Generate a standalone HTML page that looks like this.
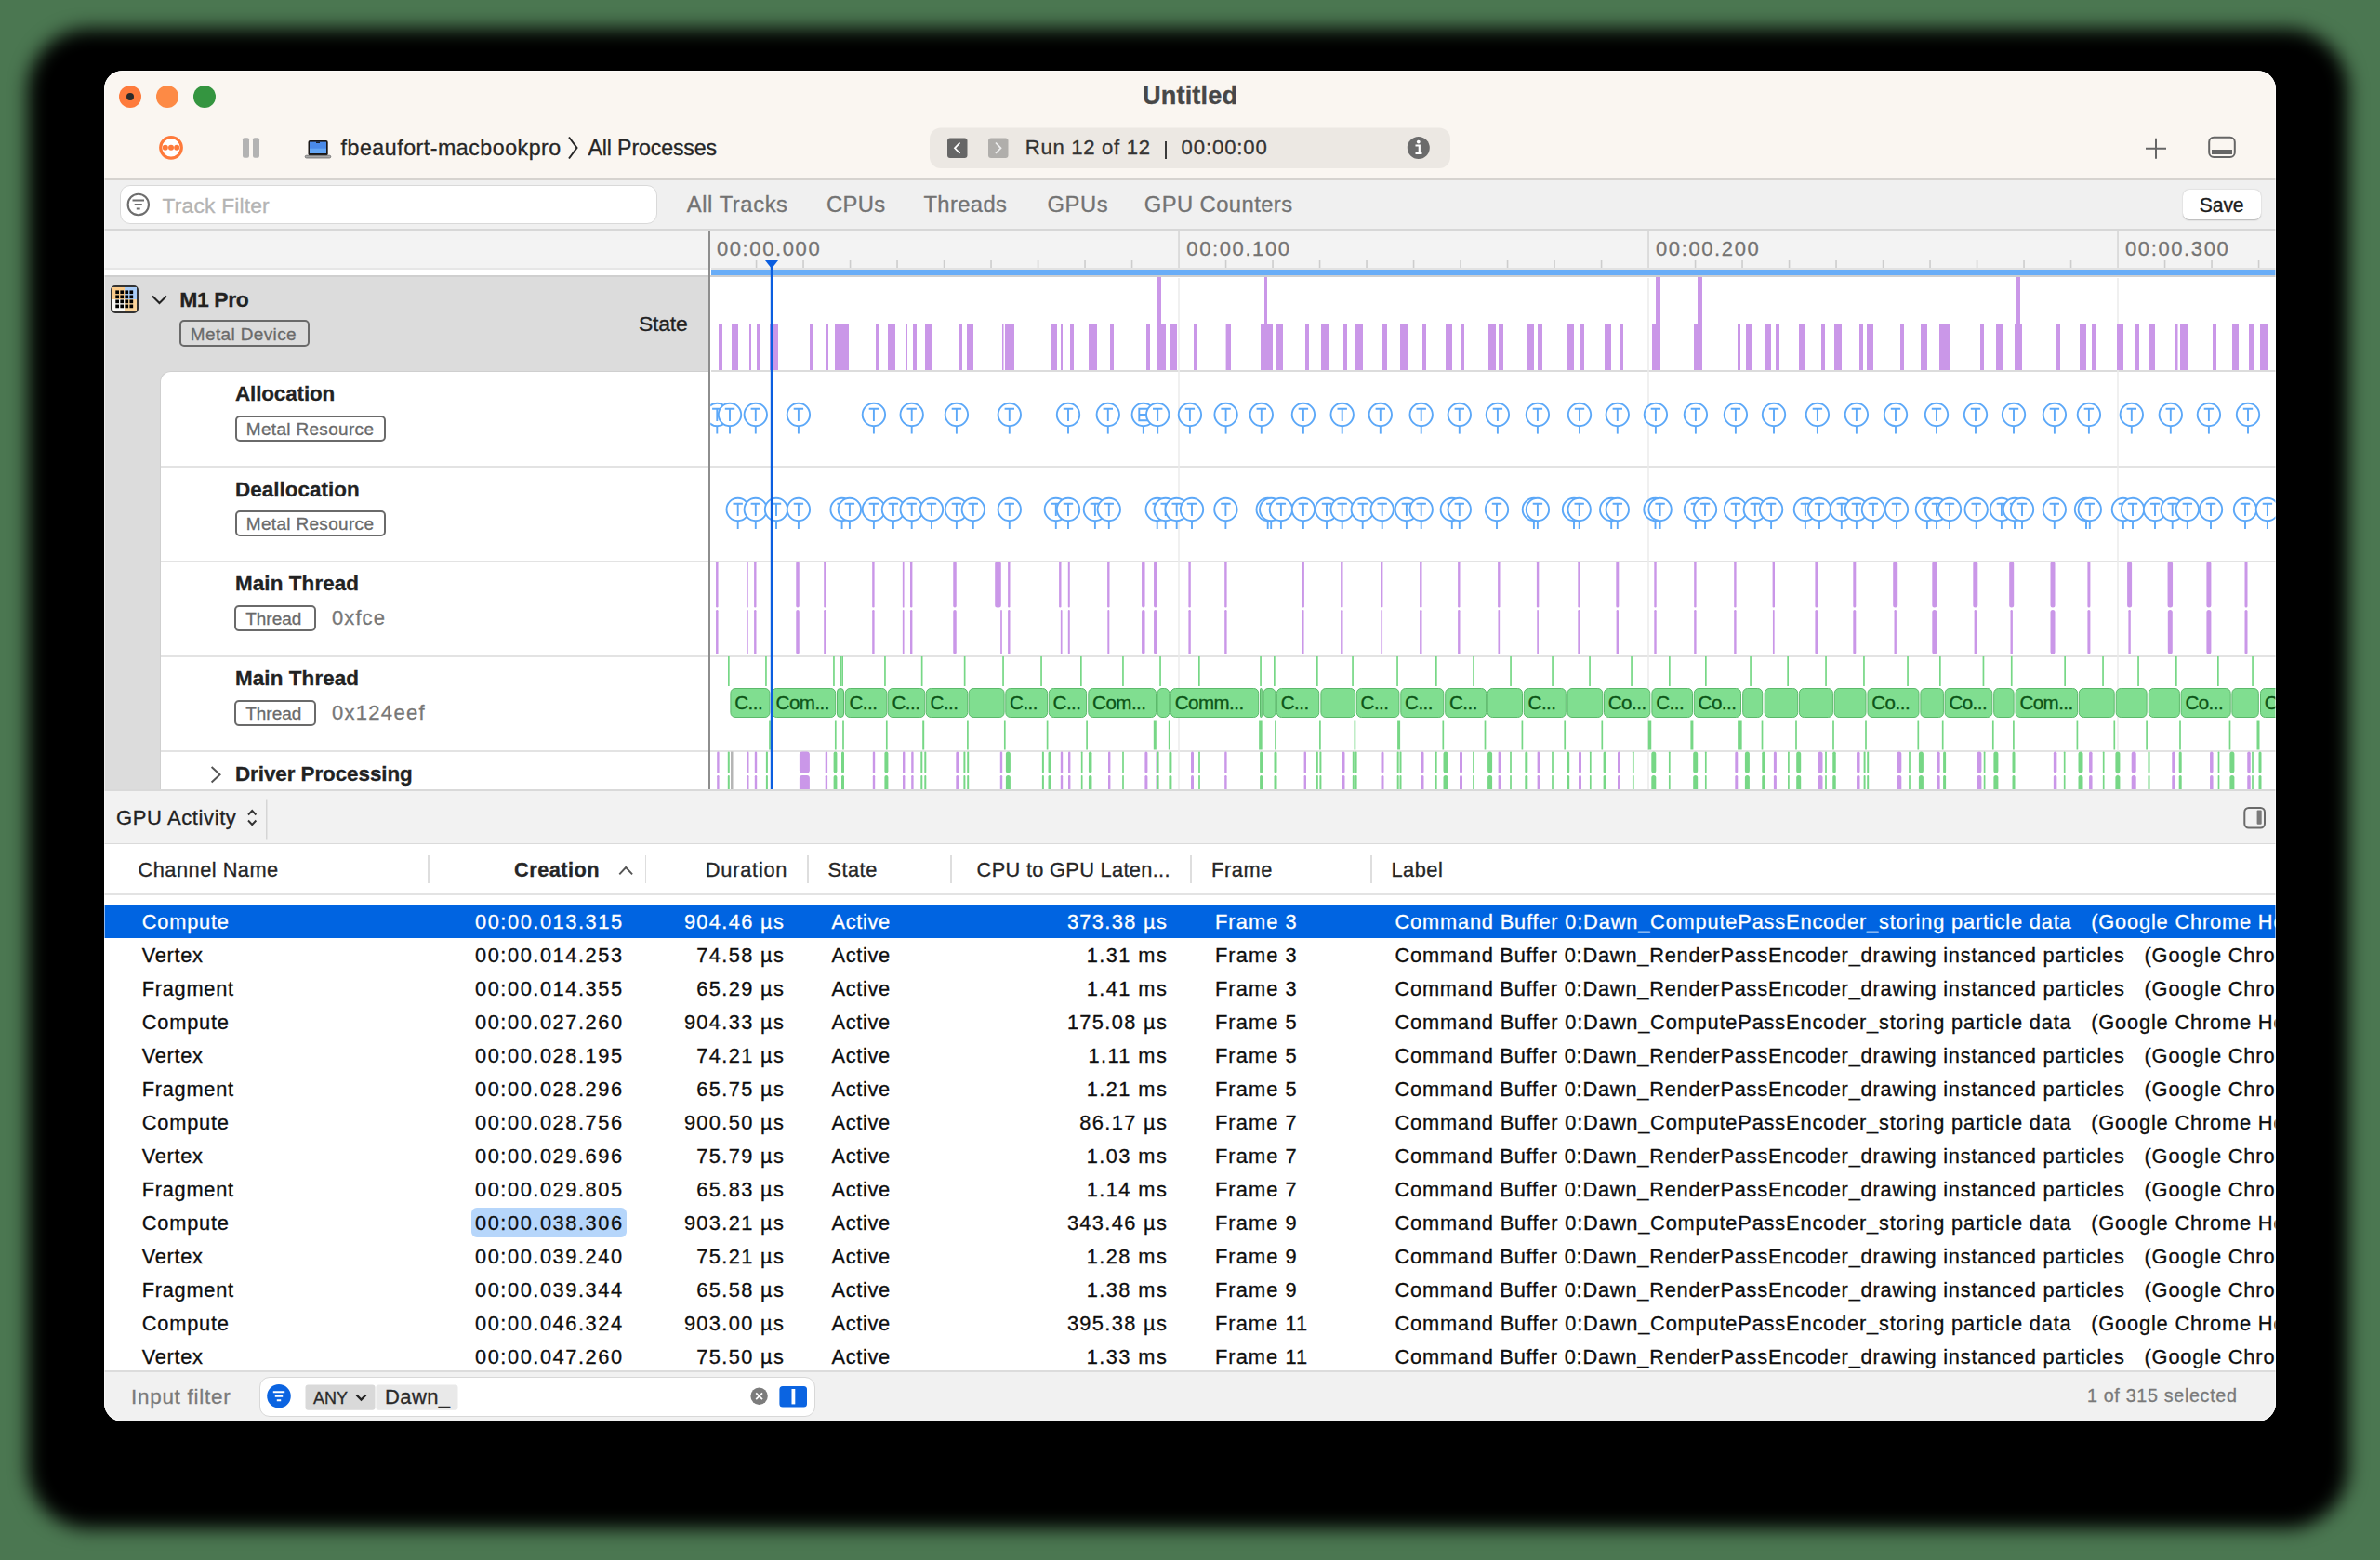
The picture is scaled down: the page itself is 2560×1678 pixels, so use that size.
<!DOCTYPE html><html><head><meta charset="utf-8"><title>Untitled - Instruments</title>
<style>
#abs div{-webkit-text-stroke:0.3px currentColor;}
html,body{margin:0;padding:0;width:2560px;height:1678px;overflow:hidden;background:#4b7751;font-family:"Liberation Sans", sans-serif;}
#win{position:absolute;left:112px;top:76px;width:2336px;height:1453px;border-radius:20px;background:#fff;box-shadow:-2px 35px 20px 80px #000;overflow:hidden;}
#abs{position:absolute;left:0;top:0;width:2560px;height:1678px;}
</style></head><body>
<div id="win"></div>
<div id="abs" style="clip-path: inset(76px 112px 149px 112px round 20px);">

<div style="position:absolute;left:112px;top:76px;width:2336px;height:117px;background:#faf6f1;"></div>
<div style="position:absolute;left:112px;top:192px;width:2336px;height:1.5px;background:#d6d3cf;"></div>
<div style="position:absolute;left:128px;top:92px;width:24px;height:24px;border-radius:50%;background:#fe7b3c;"></div>
<div style="position:absolute;left:168px;top:92px;width:24px;height:24px;border-radius:50%;background:#fd8a45;"></div>
<div style="position:absolute;left:208px;top:92px;width:24px;height:24px;border-radius:50%;background:#349540;"></div>
<div style="position:absolute;left:136px;top:100px;width:8px;height:8px;border-radius:50%;background:#2a2a2a;"></div>
<div style="position:absolute;left:780.07px;width:1000px;top:89.33px;font-size:27.14px;line-height:27.14px;color:#474747;font-weight:700;white-space:pre;text-align:center;letter-spacing:0.138px;">Untitled</div>
<svg style="position:absolute;left:0;top:0" width="2560" height="200">
<circle cx="184" cy="158.8" r="11.3" fill="#fff" stroke="#fe7a3b" stroke-width="3.2"/>
<circle cx="177.8" cy="158.8" r="3" fill="#fe7a3b"/><circle cx="184" cy="158.8" r="3" fill="#fe7a3b"/><circle cx="190.2" cy="158.8" r="3" fill="#fe7a3b"/>
<rect x="261" y="148.2" width="7" height="21.6" rx="2" fill="#b3b3b3"/><rect x="272" y="148.2" width="7" height="21.6" rx="2" fill="#b3b3b3"/>
<rect x="331.5" y="151.1" width="21.2" height="16.4" rx="2" fill="#1a1716"/>
<rect x="333" y="152.6" width="18" height="12.4" fill="#4a8ae8"/>
<rect x="333" y="159.7" width="18" height="5.3" fill="#64a6f4"/>
<rect x="340" y="152.6" width="4" height="1.3" fill="#1a1716"/>
<rect x="328.2" y="167.2" width="27.6" height="2.8" rx="1.4" fill="#a8a8a8" stroke="#5a5a5a" stroke-width="0.7"/>
<rect x="1000" y="137.6" width="560" height="43.4" rx="12" fill="#ece8e3"/>
<rect x="1019" y="148.6" width="21.5" height="21.5" rx="3" fill="#666"/>
<path d="M1032.5 153.5 L1027 159.3 L1032.5 165" fill="none" stroke="#fff" stroke-width="1.8"/>
<rect x="1063" y="148.6" width="21.5" height="21.5" rx="3" fill="#b0aeab"/>
<path d="M1071 153.5 L1076.5 159.3 L1071 165" fill="none" stroke="#eee" stroke-width="1.8"/>
<circle cx="1525.8" cy="159" r="12" fill="#6b6b6b"/>
<circle cx="1525.8" cy="152.6" r="1.9" fill="#fff"/>
<path d="M1522.5 156.5 H1526.8 V164.5 M1522.5 164.8 H1529.5" fill="none" stroke="#fff" stroke-width="2.2"/>
<path d="M2308 159.7 H2330 M2319 148.8 V170.7" stroke="#666" stroke-width="2"/>
<rect x="2376.2" y="147.7" width="27.6" height="21.2" rx="5" fill="none" stroke="#666" stroke-width="2"/>
<rect x="2379" y="161" width="22" height="5" fill="#666"/>
</svg>
<div style="position:absolute;left:366.6px;top:147.66px;font-size:23.2px;line-height:23.2px;color:#262626;font-weight:400;white-space:pre;letter-spacing:0.515px;">fbeaufort-macbookpro</div>
<svg style="position:absolute;left:0;top:0" width="700" height="200"><path d="M612 147.5 L620.5 159 L612 170.5" fill="none" stroke="#262626" stroke-width="2"/></svg>
<div style="position:absolute;left:632.5px;top:147.66px;font-size:23.2px;line-height:23.2px;color:#262626;font-weight:400;white-space:pre;letter-spacing:-0.151px;">All Processes</div>
<div style="position:absolute;left:1102.8px;top:148.48px;font-size:22.11px;line-height:22.11px;color:#333;font-weight:400;white-space:pre;letter-spacing:0.698px;">Run 12 of 12</div>
<div style="position:absolute;left:1252.6px;top:151.5px;width:2.2000000000000455px;height:19.0px;background:#3a3a3a;"></div>
<div style="position:absolute;left:1270.6px;top:148.48px;font-size:22.11px;line-height:22.11px;color:#333;font-weight:400;white-space:pre;letter-spacing:0.884px;">00:00:00</div>
<div style="position:absolute;left:112px;top:193.5px;width:2336px;height:52.5px;background:#f0f0f0;"></div>
<div style="position:absolute;left:112px;top:246px;width:2336px;height:1.5px;background:#d7d7d7;"></div>
<div style="position:absolute;left:128.5px;top:198.5px;width:578px;height:42px;border-radius:11px;background:#fff;border:1px solid #d9d9d9;box-sizing:border-box;"></div>
<svg style="position:absolute;left:0;top:0" width="200" height="260">
<circle cx="148.8" cy="220" r="11.2" fill="none" stroke="#6e6e6e" stroke-width="2.1"/>
<path d="M142.5 215.5 H155 M144.7 220 H152.8 M146.8 224.5 H150.7" stroke="#6e6e6e" stroke-width="2"/>
</svg>
<div style="position:absolute;left:174.6px;top:210.16px;font-size:22.85px;line-height:22.85px;color:#b4b4b4;font-weight:400;white-space:pre;letter-spacing:0.158px;">Track Filter</div>
<div style="position:absolute;left:738.7px;top:207.66px;font-size:23.79px;line-height:23.79px;color:#737373;font-weight:400;white-space:pre;letter-spacing:0.583px;">All Tracks</div>
<div style="position:absolute;left:889px;top:207.66px;font-size:23.79px;line-height:23.79px;color:#737373;font-weight:400;white-space:pre;letter-spacing:0.357px;">CPUs</div>
<div style="position:absolute;left:993.4px;top:207.66px;font-size:23.79px;line-height:23.79px;color:#737373;font-weight:400;white-space:pre;letter-spacing:0.373px;">Threads</div>
<div style="position:absolute;left:1126.5px;top:207.66px;font-size:23.79px;line-height:23.79px;color:#737373;font-weight:400;white-space:pre;letter-spacing:0.542px;">GPUs</div>
<div style="position:absolute;left:1230.8px;top:207.66px;font-size:23.79px;line-height:23.79px;color:#737373;font-weight:400;white-space:pre;letter-spacing:0.420px;">GPU Counters</div>
<div style="position:absolute;left:2347.6px;top:204.2px;width:84.4px;height:32.2px;border-radius:7px;background:#fff;box-shadow:0 0.5px 1.5px rgba(0,0,0,0.25);"></div>
<div style="position:absolute;left:2365.8px;top:210.28px;font-size:21.17px;line-height:21.17px;color:#1e1e1e;font-weight:400;white-space:pre;letter-spacing:-0.129px;">Save</div>
<div style="position:absolute;left:112px;top:247.5px;width:2336px;height:40.5px;background:#f3f3f3;"></div>
<div style="position:absolute;left:112px;top:288px;width:651px;height:2px;background:#e6e6e6;"></div>
<div style="position:absolute;left:112px;top:290px;width:651px;height:6px;background:#ffffff;"></div>
<div style="position:absolute;left:112px;top:296px;width:2336px;height:2px;background:#cfcfcf;"></div>
<div style="position:absolute;left:765px;top:288px;width:1683px;height:2px;background:#e2e2e2;"></div>
<div style="position:absolute;left:765px;top:290px;width:1683px;height:6px;background:#69adf7;"></div>
<div style="position:absolute;left:112px;top:298px;width:651px;height:551px;background:#dcdcdc;"></div>
<div style="position:absolute;left:171.5px;top:399px;width:592px;height:460px;border-top-left-radius:12px;background:#fff;border-left:1px solid #cfcfcf;border-top:1px solid #cfcfcf;box-sizing:border-box;"></div>
<div style="position:absolute;left:172.5px;top:501px;width:2275.5px;height:1.6000000000000227px;background:#e3e3e3;"></div>
<div style="position:absolute;left:172.5px;top:603px;width:2275.5px;height:1.6000000000000227px;background:#e3e3e3;"></div>
<div style="position:absolute;left:172.5px;top:705px;width:2275.5px;height:1.6000000000000227px;background:#e3e3e3;"></div>
<div style="position:absolute;left:172.5px;top:807px;width:2275.5px;height:1.6000000000000227px;background:#e3e3e3;"></div>
<div style="position:absolute;left:765px;top:398px;width:1683px;height:1.6000000000000227px;background:#dcdcdc;"></div>
<div style="position:absolute;left:762px;top:247.5px;width:2.2000000000000455px;height:601.5px;background:#8e8e8e;"></div>
<svg style="position:absolute;left:0;top:0" width="300" height="860">
<rect x="120" y="308" width="28" height="28" rx="4" fill="#fbfaf7" stroke="#333" stroke-width="2"/>
<path d="M121 309 H134 V322 H121 Z" fill="#fbcb8a"/><path d="M134 309 H147 V322 H134 Z" fill="#a9cdf8"/>
<path d="M134 322 H147 V335 H134 Z" fill="#fbd49a"/>
<g fill="#000">
<rect x="124.30" y="312.40" width="3.7" height="3.7"/><rect x="124.30" y="317.45" width="3.7" height="3.7"/><rect x="124.30" y="322.50" width="3.7" height="3.7"/><rect x="124.30" y="327.55" width="3.7" height="3.7"/><rect x="129.35" y="312.40" width="3.7" height="3.7"/><rect x="129.35" y="317.45" width="3.7" height="3.7"/><rect x="129.35" y="322.50" width="3.7" height="3.7"/><rect x="129.35" y="327.55" width="3.7" height="3.7"/><rect x="134.40" y="312.40" width="3.7" height="3.7"/><rect x="134.40" y="317.45" width="3.7" height="3.7"/><rect x="134.40" y="322.50" width="3.7" height="3.7"/><rect x="134.40" y="327.55" width="3.7" height="3.7"/><rect x="139.45" y="312.40" width="3.7" height="3.7"/><rect x="139.45" y="317.45" width="3.7" height="3.7"/><rect x="139.45" y="322.50" width="3.7" height="3.7"/><rect x="139.45" y="327.55" width="3.7" height="3.7"/>
</g>
<path d="M164 318.5 L171.5 326 L179 318.5" fill="none" stroke="#222" stroke-width="2.1"/>
<path d="M227.6 825 L236.5 833.2 L227.6 841.4" fill="none" stroke="#555" stroke-width="2"/>
</svg>
<div style="position:absolute;left:193.2px;top:311.07px;font-size:22.95px;line-height:22.95px;color:#222;font-weight:700;white-space:pre;letter-spacing:-0.367px;">M1 Pro</div>
<div style="position:absolute;left:192.6px;top:344.4px;width:140.70000000000002px;height:29.0px;border:2px solid #6a6a6a;border-radius:5px;box-sizing:border-box;"></div>
<div style="position:absolute;left:204.79999999999998px;top:350.64px;font-size:18.97px;line-height:18.97px;color:#6a6a6a;font-weight:400;white-space:pre;letter-spacing:0.384px;">Metal Device</div>
<div style="position:absolute;left:687px;top:337.17px;font-size:22.95px;line-height:22.95px;color:#222;font-weight:400;white-space:pre;letter-spacing:-0.204px;">State</div>
<div style="position:absolute;left:253px;top:413.21px;font-size:22.43px;line-height:22.43px;color:#222;font-weight:700;white-space:pre;letter-spacing:-0.124px;">Allocation</div>
<div style="position:absolute;left:252.6px;top:446.7px;width:162.70000000000002px;height:28.69999999999999px;border:2px solid #6a6a6a;border-radius:5px;box-sizing:border-box;"></div>
<div style="position:absolute;left:264.8px;top:452.94px;font-size:18.97px;line-height:18.97px;color:#6a6a6a;font-weight:400;white-space:pre;letter-spacing:0.339px;">Metal Resource</div>
<div style="position:absolute;left:253px;top:515.81px;font-size:22.43px;line-height:22.43px;color:#222;font-weight:700;white-space:pre;letter-spacing:0.038px;">Deallocation</div>
<div style="position:absolute;left:252.6px;top:548.7px;width:162.70000000000002px;height:28.699999999999932px;border:2px solid #6a6a6a;border-radius:5px;box-sizing:border-box;"></div>
<div style="position:absolute;left:264.8px;top:554.94px;font-size:18.97px;line-height:18.97px;color:#6a6a6a;font-weight:400;white-space:pre;letter-spacing:0.339px;">Metal Resource</div>
<div style="position:absolute;left:253px;top:617.31px;font-size:22.43px;line-height:22.43px;color:#222;font-weight:700;white-space:pre;letter-spacing:0.100px;">Main Thread</div>
<div style="position:absolute;left:252px;top:650.8px;width:87.60000000000002px;height:28.40000000000009px;border:2px solid #6a6a6a;border-radius:5px;box-sizing:border-box;"></div>
<div style="position:absolute;left:264.2px;top:657.04px;font-size:18.97px;line-height:18.97px;color:#6a6a6a;font-weight:400;white-space:pre;letter-spacing:0.019px;">Thread</div>
<div style="position:absolute;left:357px;top:653.87px;font-size:22.01px;line-height:22.01px;color:#777;font-weight:400;white-space:pre;letter-spacing:1.070px;">0xfce</div>
<div style="position:absolute;left:253px;top:719.31px;font-size:22.43px;line-height:22.43px;color:#222;font-weight:700;white-space:pre;letter-spacing:0.100px;">Main Thread</div>
<div style="position:absolute;left:252px;top:752.8px;width:87.60000000000002px;height:28.40000000000009px;border:2px solid #6a6a6a;border-radius:5px;box-sizing:border-box;"></div>
<div style="position:absolute;left:264.2px;top:759.04px;font-size:18.97px;line-height:18.97px;color:#6a6a6a;font-weight:400;white-space:pre;letter-spacing:0.019px;">Thread</div>
<div style="position:absolute;left:357px;top:755.87px;font-size:22.01px;line-height:22.01px;color:#777;font-weight:400;white-space:pre;letter-spacing:1.287px;">0x124eef</div>
<div style="position:absolute;left:253px;top:821.71px;font-size:22.43px;line-height:22.43px;color:#222;font-weight:700;white-space:pre;letter-spacing:-0.070px;">Driver Processing</div>
<svg style="position:absolute;left:0;top:0" width="2560" height="860"><defs><clipPath id="tl"><rect x="764.2" y="240" width="1700" height="609"/></clipPath></defs><g clip-path="url(#tl)"><rect x="812.75" y="280" width="1.6" height="8" fill="#cdcdcd"/><rect x="863.25" y="280" width="1.6" height="8" fill="#cdcdcd"/><rect x="913.75" y="280" width="1.6" height="8" fill="#cdcdcd"/><rect x="964.25" y="280" width="1.6" height="8" fill="#cdcdcd"/><rect x="1014.75" y="280" width="1.6" height="8" fill="#cdcdcd"/><rect x="1065.25" y="280" width="1.6" height="8" fill="#cdcdcd"/><rect x="1115.75" y="280" width="1.6" height="8" fill="#cdcdcd"/><rect x="1166.25" y="280" width="1.6" height="8" fill="#cdcdcd"/><rect x="1216.75" y="280" width="1.6" height="8" fill="#cdcdcd"/><rect x="1267.25" y="248" width="1.6" height="40" fill="#d6d6d6"/><rect x="1317.75" y="280" width="1.6" height="8" fill="#cdcdcd"/><rect x="1368.25" y="280" width="1.6" height="8" fill="#cdcdcd"/><rect x="1418.75" y="280" width="1.6" height="8" fill="#cdcdcd"/><rect x="1469.25" y="280" width="1.6" height="8" fill="#cdcdcd"/><rect x="1519.75" y="280" width="1.6" height="8" fill="#cdcdcd"/><rect x="1570.25" y="280" width="1.6" height="8" fill="#cdcdcd"/><rect x="1620.75" y="280" width="1.6" height="8" fill="#cdcdcd"/><rect x="1671.25" y="280" width="1.6" height="8" fill="#cdcdcd"/><rect x="1721.75" y="280" width="1.6" height="8" fill="#cdcdcd"/><rect x="1772.25" y="248" width="1.6" height="40" fill="#d6d6d6"/><rect x="1822.75" y="280" width="1.6" height="8" fill="#cdcdcd"/><rect x="1873.25" y="280" width="1.6" height="8" fill="#cdcdcd"/><rect x="1923.75" y="280" width="1.6" height="8" fill="#cdcdcd"/><rect x="1974.25" y="280" width="1.6" height="8" fill="#cdcdcd"/><rect x="2024.75" y="280" width="1.6" height="8" fill="#cdcdcd"/><rect x="2075.25" y="280" width="1.6" height="8" fill="#cdcdcd"/><rect x="2125.75" y="280" width="1.6" height="8" fill="#cdcdcd"/><rect x="2176.25" y="280" width="1.6" height="8" fill="#cdcdcd"/><rect x="2226.75" y="280" width="1.6" height="8" fill="#cdcdcd"/><rect x="2277.25" y="248" width="1.6" height="40" fill="#d6d6d6"/><rect x="2327.75" y="280" width="1.6" height="8" fill="#cdcdcd"/><rect x="2378.25" y="280" width="1.6" height="8" fill="#cdcdcd"/><rect x="2428.75" y="280" width="1.6" height="8" fill="#cdcdcd"/><rect x="1267.25" y="299" width="1.5" height="550" fill="#ececec"/><rect x="1772.25" y="299" width="1.5" height="550" fill="#ececec"/><rect x="2277.25" y="299" width="1.5" height="550" fill="#ececec"/><rect x="773" y="348" width="4.0" height="50" fill="#ca97e8"/><rect x="787" y="348" width="7.0" height="50" fill="#ca97e8"/><rect x="806" y="348" width="2.0" height="50" fill="#ca97e8"/><rect x="814" y="348" width="4.0" height="50" fill="#ca97e8"/><rect x="828" y="348" width="9.0" height="50" fill="#ca97e8"/><rect x="871" y="348" width="3.0" height="50" fill="#ca97e8"/><rect x="889" y="348" width="2.0" height="50" fill="#ca97e8"/><rect x="898" y="348" width="15.0" height="50" fill="#ca97e8"/><rect x="942" y="348" width="3.0" height="50" fill="#ca97e8"/><rect x="955" y="348" width="8.0" height="50" fill="#ca97e8"/><rect x="974" y="348" width="2.0" height="50" fill="#ca97e8"/><rect x="982" y="348" width="4.0" height="50" fill="#ca97e8"/><rect x="995" y="348" width="7.0" height="50" fill="#ca97e8"/><rect x="1031" y="348" width="4.0" height="50" fill="#ca97e8"/><rect x="1040" y="348" width="7.0" height="50" fill="#ca97e8"/><rect x="1078" y="348" width="1.5" height="50" fill="#ca97e8"/><rect x="1081" y="348" width="10.0" height="50" fill="#ca97e8"/><rect x="1130" y="348" width="7.0" height="50" fill="#ca97e8"/><rect x="1141" y="348" width="2.0" height="50" fill="#ca97e8"/><rect x="1151" y="348" width="4.0" height="50" fill="#ca97e8"/><rect x="1171" y="348" width="9.0" height="50" fill="#ca97e8"/><rect x="1194" y="348" width="4.0" height="50" fill="#ca97e8"/><rect x="1233" y="348" width="4.0" height="50" fill="#ca97e8"/><rect x="1245" y="348" width="9.0" height="50" fill="#ca97e8"/><rect x="1258" y="348" width="8.0" height="50" fill="#ca97e8"/><rect x="1284" y="348" width="4.0" height="50" fill="#ca97e8"/><rect x="1318.6" y="348" width="5.4" height="50" fill="#ca97e8"/><rect x="1356" y="348" width="13.0" height="50" fill="#ca97e8"/><rect x="1372" y="348" width="8.0" height="50" fill="#ca97e8"/><rect x="1404" y="348" width="4.0" height="50" fill="#ca97e8"/><rect x="1421" y="348" width="8.0" height="50" fill="#ca97e8"/><rect x="1445" y="348" width="4.0" height="50" fill="#ca97e8"/><rect x="1458" y="348" width="8.0" height="50" fill="#ca97e8"/><rect x="1487" y="348" width="5.0" height="50" fill="#ca97e8"/><rect x="1506" y="348" width="9.0" height="50" fill="#ca97e8"/><rect x="1530" y="348" width="4.0" height="50" fill="#ca97e8"/><rect x="1555" y="348" width="7.0" height="50" fill="#ca97e8"/><rect x="1571" y="348" width="4.0" height="50" fill="#ca97e8"/><rect x="1601" y="348" width="8.0" height="50" fill="#ca97e8"/><rect x="1612" y="348" width="5.0" height="50" fill="#ca97e8"/><rect x="1642" y="348" width="8.0" height="50" fill="#ca97e8"/><rect x="1654" y="348" width="5.0" height="50" fill="#ca97e8"/><rect x="1686" y="348" width="7.0" height="50" fill="#ca97e8"/><rect x="1699" y="348" width="5.0" height="50" fill="#ca97e8"/><rect x="1726" y="348" width="7.0" height="50" fill="#ca97e8"/><rect x="1742" y="348" width="4.0" height="50" fill="#ca97e8"/><rect x="1777" y="348" width="9.0" height="50" fill="#ca97e8"/><rect x="1822" y="348" width="9.0" height="50" fill="#ca97e8"/><rect x="1869" y="348" width="3.0" height="50" fill="#ca97e8"/><rect x="1878" y="348" width="7.0" height="50" fill="#ca97e8"/><rect x="1898" y="348" width="7.0" height="50" fill="#ca97e8"/><rect x="1910" y="348" width="4.0" height="50" fill="#ca97e8"/><rect x="1935" y="348" width="7.0" height="50" fill="#ca97e8"/><rect x="1959" y="348" width="4.0" height="50" fill="#ca97e8"/><rect x="1973" y="348" width="8.0" height="50" fill="#ca97e8"/><rect x="2000" y="348" width="4.0" height="50" fill="#ca97e8"/><rect x="2008" y="348" width="7.0" height="50" fill="#ca97e8"/><rect x="2044" y="348" width="4.0" height="50" fill="#ca97e8"/><rect x="2066" y="348" width="7.0" height="50" fill="#ca97e8"/><rect x="2086" y="348" width="12.0" height="50" fill="#ca97e8"/><rect x="2130" y="348" width="4.0" height="50" fill="#ca97e8"/><rect x="2147" y="348" width="7.0" height="50" fill="#ca97e8"/><rect x="2167" y="348" width="8.0" height="50" fill="#ca97e8"/><rect x="2212" y="348" width="4.0" height="50" fill="#ca97e8"/><rect x="2237" y="348" width="7.0" height="50" fill="#ca97e8"/><rect x="2250" y="348" width="4.0" height="50" fill="#ca97e8"/><rect x="2277" y="348" width="7.0" height="50" fill="#ca97e8"/><rect x="2296" y="348" width="5.0" height="50" fill="#ca97e8"/><rect x="2311" y="348" width="7.0" height="50" fill="#ca97e8"/><rect x="2339" y="348" width="3.5" height="50" fill="#ca97e8"/><rect x="2345" y="348" width="8.0" height="50" fill="#ca97e8"/><rect x="2380" y="348" width="4.0" height="50" fill="#ca97e8"/><rect x="2401" y="348" width="7.0" height="50" fill="#ca97e8"/><rect x="2419" y="348" width="5.0" height="50" fill="#ca97e8"/><rect x="2431" y="348" width="8.0" height="50" fill="#ca97e8"/><rect x="1245" y="298" width="4.0" height="50" fill="#ca97e8"/><rect x="1360" y="298" width="3.0" height="50" fill="#ca97e8"/><rect x="1781" y="298" width="5.0" height="50" fill="#ca97e8"/><rect x="1826" y="298" width="5.0" height="50" fill="#ca97e8"/><rect x="2169" y="298" width="4.0" height="50" fill="#ca97e8"/><g stroke="#5ca8f8" stroke-width="1.9" fill="none"><circle cx="771.3" cy="446" r="12.2" fill="#fff"/><path d="M771.3 458.2 V466.6"/></g><path d="M766.1 439.7 H776.5 M771.3 439.7 V453.0" stroke="#5ca8f8" stroke-width="1.9" fill="none"/><g stroke="#5ca8f8" stroke-width="1.9" fill="none"><circle cx="785.0" cy="446" r="12.2" fill="#fff"/><path d="M785.0 458.2 V466.6"/></g><path d="M779.8 439.7 H790.2 M785.0 439.7 V453.0" stroke="#5ca8f8" stroke-width="1.9" fill="none"/><g stroke="#5ca8f8" stroke-width="1.9" fill="none"><circle cx="812.8" cy="446" r="12.2" fill="#fff"/><path d="M812.8 458.2 V466.6"/></g><path d="M807.6 439.7 H818.0 M812.8 439.7 V453.0" stroke="#5ca8f8" stroke-width="1.9" fill="none"/><g stroke="#5ca8f8" stroke-width="1.9" fill="none"><circle cx="858.9" cy="446" r="12.2" fill="#fff"/><path d="M858.9 458.2 V466.6"/></g><path d="M853.7 439.7 H864.1 M858.9 439.7 V453.0" stroke="#5ca8f8" stroke-width="1.9" fill="none"/><g stroke="#5ca8f8" stroke-width="1.9" fill="none"><circle cx="939.9" cy="446" r="12.2" fill="#fff"/><path d="M939.9 458.2 V466.6"/></g><path d="M934.7 439.7 H945.1 M939.9 439.7 V453.0" stroke="#5ca8f8" stroke-width="1.9" fill="none"/><g stroke="#5ca8f8" stroke-width="1.9" fill="none"><circle cx="980.7" cy="446" r="12.2" fill="#fff"/><path d="M980.7 458.2 V466.6"/></g><path d="M975.5 439.7 H985.9 M980.7 439.7 V453.0" stroke="#5ca8f8" stroke-width="1.9" fill="none"/><g stroke="#5ca8f8" stroke-width="1.9" fill="none"><circle cx="1028.9" cy="446" r="12.2" fill="#fff"/><path d="M1028.9 458.2 V466.6"/></g><path d="M1023.7 439.7 H1034.1 M1028.9 439.7 V453.0" stroke="#5ca8f8" stroke-width="1.9" fill="none"/><g stroke="#5ca8f8" stroke-width="1.9" fill="none"><circle cx="1085.8" cy="446" r="12.2" fill="#fff"/><path d="M1085.8 458.2 V466.6"/></g><path d="M1080.6 439.7 H1091.0 M1085.8 439.7 V453.0" stroke="#5ca8f8" stroke-width="1.9" fill="none"/><g stroke="#5ca8f8" stroke-width="1.9" fill="none"><circle cx="1149.0" cy="446" r="12.2" fill="#fff"/><path d="M1149.0 458.2 V466.6"/></g><path d="M1143.8 439.7 H1154.2 M1149.0 439.7 V453.0" stroke="#5ca8f8" stroke-width="1.9" fill="none"/><g stroke="#5ca8f8" stroke-width="1.9" fill="none"><circle cx="1191.8" cy="446" r="12.2" fill="#fff"/><path d="M1191.8 458.2 V466.6"/></g><path d="M1186.6 439.7 H1197.0 M1191.8 439.7 V453.0" stroke="#5ca8f8" stroke-width="1.9" fill="none"/><g stroke="#5ca8f8" stroke-width="1.9" fill="none"><circle cx="1229.8" cy="446" r="12.2" fill="#fff"/><path d="M1229.8 458.2 V466.6"/></g><path d="M1234.8 439.7 H1225.3 V452.3 H1234.8 M1225.3 446.0 H1233.8" stroke="#5ca8f8" stroke-width="1.9" fill="none"/><g stroke="#5ca8f8" stroke-width="1.9" fill="none"><circle cx="1245.2" cy="446" r="12.2" fill="#fff"/><path d="M1245.2 458.2 V466.6"/></g><path d="M1240.0 439.7 H1250.4 M1245.2 439.7 V453.0" stroke="#5ca8f8" stroke-width="1.9" fill="none"/><g stroke="#5ca8f8" stroke-width="1.9" fill="none"><circle cx="1279.9" cy="446" r="12.2" fill="#fff"/><path d="M1279.9 458.2 V466.6"/></g><path d="M1274.7 439.7 H1285.1 M1279.9 439.7 V453.0" stroke="#5ca8f8" stroke-width="1.9" fill="none"/><g stroke="#5ca8f8" stroke-width="1.9" fill="none"><circle cx="1318.6" cy="446" r="12.2" fill="#fff"/><path d="M1318.6 458.2 V466.6"/></g><path d="M1313.4 439.7 H1323.8 M1318.6 439.7 V453.0" stroke="#5ca8f8" stroke-width="1.9" fill="none"/><g stroke="#5ca8f8" stroke-width="1.9" fill="none"><circle cx="1356.8" cy="446" r="12.2" fill="#fff"/><path d="M1356.8 458.2 V466.6"/></g><path d="M1351.6 439.7 H1362.0 M1356.8 439.7 V453.0" stroke="#5ca8f8" stroke-width="1.9" fill="none"/><g stroke="#5ca8f8" stroke-width="1.9" fill="none"><circle cx="1401.9" cy="446" r="12.2" fill="#fff"/><path d="M1401.9 458.2 V466.6"/></g><path d="M1396.7 439.7 H1407.1 M1401.9 439.7 V453.0" stroke="#5ca8f8" stroke-width="1.9" fill="none"/><g stroke="#5ca8f8" stroke-width="1.9" fill="none"><circle cx="1443.7" cy="446" r="12.2" fill="#fff"/><path d="M1443.7 458.2 V466.6"/></g><path d="M1438.5 439.7 H1448.9 M1443.7 439.7 V453.0" stroke="#5ca8f8" stroke-width="1.9" fill="none"/><g stroke="#5ca8f8" stroke-width="1.9" fill="none"><circle cx="1484.8" cy="446" r="12.2" fill="#fff"/><path d="M1484.8 458.2 V466.6"/></g><path d="M1479.6 439.7 H1490.0 M1484.8 439.7 V453.0" stroke="#5ca8f8" stroke-width="1.9" fill="none"/><g stroke="#5ca8f8" stroke-width="1.9" fill="none"><circle cx="1528.7" cy="446" r="12.2" fill="#fff"/><path d="M1528.7 458.2 V466.6"/></g><path d="M1523.5 439.7 H1533.9 M1528.7 439.7 V453.0" stroke="#5ca8f8" stroke-width="1.9" fill="none"/><g stroke="#5ca8f8" stroke-width="1.9" fill="none"><circle cx="1569.8" cy="446" r="12.2" fill="#fff"/><path d="M1569.8 458.2 V466.6"/></g><path d="M1564.6 439.7 H1575.0 M1569.8 439.7 V453.0" stroke="#5ca8f8" stroke-width="1.9" fill="none"/><g stroke="#5ca8f8" stroke-width="1.9" fill="none"><circle cx="1610.9" cy="446" r="12.2" fill="#fff"/><path d="M1610.9 458.2 V466.6"/></g><path d="M1605.7 439.7 H1616.1 M1610.9 439.7 V453.0" stroke="#5ca8f8" stroke-width="1.9" fill="none"/><g stroke="#5ca8f8" stroke-width="1.9" fill="none"><circle cx="1653.9" cy="446" r="12.2" fill="#fff"/><path d="M1653.9 458.2 V466.6"/></g><path d="M1648.7 439.7 H1659.1 M1653.9 439.7 V453.0" stroke="#5ca8f8" stroke-width="1.9" fill="none"/><g stroke="#5ca8f8" stroke-width="1.9" fill="none"><circle cx="1699.0" cy="446" r="12.2" fill="#fff"/><path d="M1699.0 458.2 V466.6"/></g><path d="M1693.8 439.7 H1704.2 M1699.0 439.7 V453.0" stroke="#5ca8f8" stroke-width="1.9" fill="none"/><g stroke="#5ca8f8" stroke-width="1.9" fill="none"><circle cx="1739.8" cy="446" r="12.2" fill="#fff"/><path d="M1739.8 458.2 V466.6"/></g><path d="M1734.6 439.7 H1745.0 M1739.8 439.7 V453.0" stroke="#5ca8f8" stroke-width="1.9" fill="none"/><g stroke="#5ca8f8" stroke-width="1.9" fill="none"><circle cx="1780.9" cy="446" r="12.2" fill="#fff"/><path d="M1780.9 458.2 V466.6"/></g><path d="M1775.7 439.7 H1786.1 M1780.9 439.7 V453.0" stroke="#5ca8f8" stroke-width="1.9" fill="none"/><g stroke="#5ca8f8" stroke-width="1.9" fill="none"><circle cx="1823.9" cy="446" r="12.2" fill="#fff"/><path d="M1823.9 458.2 V466.6"/></g><path d="M1818.7 439.7 H1829.1 M1823.9 439.7 V453.0" stroke="#5ca8f8" stroke-width="1.9" fill="none"/><g stroke="#5ca8f8" stroke-width="1.9" fill="none"><circle cx="1866.9" cy="446" r="12.2" fill="#fff"/><path d="M1866.9 458.2 V466.6"/></g><path d="M1861.7 439.7 H1872.1 M1866.9 439.7 V453.0" stroke="#5ca8f8" stroke-width="1.9" fill="none"/><g stroke="#5ca8f8" stroke-width="1.9" fill="none"><circle cx="1908.0" cy="446" r="12.2" fill="#fff"/><path d="M1908.0 458.2 V466.6"/></g><path d="M1902.8 439.7 H1913.2 M1908.0 439.7 V453.0" stroke="#5ca8f8" stroke-width="1.9" fill="none"/><g stroke="#5ca8f8" stroke-width="1.9" fill="none"><circle cx="1954.9" cy="446" r="12.2" fill="#fff"/><path d="M1954.9 458.2 V466.6"/></g><path d="M1949.7 439.7 H1960.1 M1954.9 439.7 V453.0" stroke="#5ca8f8" stroke-width="1.9" fill="none"/><g stroke="#5ca8f8" stroke-width="1.9" fill="none"><circle cx="1996.9" cy="446" r="12.2" fill="#fff"/><path d="M1996.9 458.2 V466.6"/></g><path d="M1991.7 439.7 H2002.1 M1996.9 439.7 V453.0" stroke="#5ca8f8" stroke-width="1.9" fill="none"/><g stroke="#5ca8f8" stroke-width="1.9" fill="none"><circle cx="2039.0" cy="446" r="12.2" fill="#fff"/><path d="M2039.0 458.2 V466.6"/></g><path d="M2033.8 439.7 H2044.2 M2039.0 439.7 V453.0" stroke="#5ca8f8" stroke-width="1.9" fill="none"/><g stroke="#5ca8f8" stroke-width="1.9" fill="none"><circle cx="2083.0" cy="446" r="12.2" fill="#fff"/><path d="M2083.0 458.2 V466.6"/></g><path d="M2077.8 439.7 H2088.2 M2083.0 439.7 V453.0" stroke="#5ca8f8" stroke-width="1.9" fill="none"/><g stroke="#5ca8f8" stroke-width="1.9" fill="none"><circle cx="2125.0" cy="446" r="12.2" fill="#fff"/><path d="M2125.0 458.2 V466.6"/></g><path d="M2119.8 439.7 H2130.2 M2125.0 439.7 V453.0" stroke="#5ca8f8" stroke-width="1.9" fill="none"/><g stroke="#5ca8f8" stroke-width="1.9" fill="none"><circle cx="2166.0" cy="446" r="12.2" fill="#fff"/><path d="M2166.0 458.2 V466.6"/></g><path d="M2160.8 439.7 H2171.2 M2166.0 439.7 V453.0" stroke="#5ca8f8" stroke-width="1.9" fill="none"/><g stroke="#5ca8f8" stroke-width="1.9" fill="none"><circle cx="2209.9" cy="446" r="12.2" fill="#fff"/><path d="M2209.9 458.2 V466.6"/></g><path d="M2204.7 439.7 H2215.1 M2209.9 439.7 V453.0" stroke="#5ca8f8" stroke-width="1.9" fill="none"/><g stroke="#5ca8f8" stroke-width="1.9" fill="none"><circle cx="2246.9" cy="446" r="12.2" fill="#fff"/><path d="M2246.9 458.2 V466.6"/></g><path d="M2241.7 439.7 H2252.1 M2246.9 439.7 V453.0" stroke="#5ca8f8" stroke-width="1.9" fill="none"/><g stroke="#5ca8f8" stroke-width="1.9" fill="none"><circle cx="2292.8" cy="446" r="12.2" fill="#fff"/><path d="M2292.8 458.2 V466.6"/></g><path d="M2287.6 439.7 H2298.0 M2292.8 439.7 V453.0" stroke="#5ca8f8" stroke-width="1.9" fill="none"/><g stroke="#5ca8f8" stroke-width="1.9" fill="none"><circle cx="2334.8" cy="446" r="12.2" fill="#fff"/><path d="M2334.8 458.2 V466.6"/></g><path d="M2329.6 439.7 H2340.0 M2334.8 439.7 V453.0" stroke="#5ca8f8" stroke-width="1.9" fill="none"/><g stroke="#5ca8f8" stroke-width="1.9" fill="none"><circle cx="2375.9" cy="446" r="12.2" fill="#fff"/><path d="M2375.9 458.2 V466.6"/></g><path d="M2370.7 439.7 H2381.1 M2375.9 439.7 V453.0" stroke="#5ca8f8" stroke-width="1.9" fill="none"/><g stroke="#5ca8f8" stroke-width="1.9" fill="none"><circle cx="2418.0" cy="446" r="12.2" fill="#fff"/><path d="M2418.0 458.2 V466.6"/></g><path d="M2412.8 439.7 H2423.2 M2418.0 439.7 V453.0" stroke="#5ca8f8" stroke-width="1.9" fill="none"/><g stroke="#5ca8f8" stroke-width="1.9" fill="none"><circle cx="793.7" cy="548" r="12.2" fill="#fff"/><path d="M793.7 560.2 V569"/></g><path d="M788.5 541.7 H798.9 M793.7 541.7 V555.0" stroke="#5ca8f8" stroke-width="1.9" fill="none"/><g stroke="#5ca8f8" stroke-width="1.9" fill="none"><circle cx="812.8" cy="548" r="12.2" fill="#fff"/><path d="M812.8 560.2 V569"/></g><path d="M807.6 541.7 H818.0 M812.8 541.7 V555.0" stroke="#5ca8f8" stroke-width="1.9" fill="none"/><g stroke="#5ca8f8" stroke-width="1.9" fill="none"><circle cx="835.0" cy="548" r="12.2" fill="#fff"/><path d="M835.0 560.2 V569"/></g><path d="M829.8 541.7 H840.2 M835.0 541.7 V555.0" stroke="#5ca8f8" stroke-width="1.9" fill="none"/><g stroke="#5ca8f8" stroke-width="1.9" fill="none"><circle cx="858.9" cy="548" r="12.2" fill="#fff"/><path d="M858.9 560.2 V569"/></g><path d="M853.7 541.7 H864.1 M858.9 541.7 V555.0" stroke="#5ca8f8" stroke-width="1.9" fill="none"/><g stroke="#5ca8f8" stroke-width="1.9" fill="none"><circle cx="905.6" cy="548" r="12.2" fill="#fff"/><path d="M905.6 560.2 V569"/></g><path d="M900.4 541.7 H910.8 M905.6 541.7 V555.0" stroke="#5ca8f8" stroke-width="1.9" fill="none"/><g stroke="#5ca8f8" stroke-width="1.9" fill="none"><circle cx="913.9" cy="548" r="12.2" fill="#fff"/><path d="M913.9 560.2 V569"/></g><path d="M908.7 541.7 H919.1 M913.9 541.7 V555.0" stroke="#5ca8f8" stroke-width="1.9" fill="none"/><g stroke="#5ca8f8" stroke-width="1.9" fill="none"><circle cx="939.9" cy="548" r="12.2" fill="#fff"/><path d="M939.9 560.2 V569"/></g><path d="M934.7 541.7 H945.1 M939.9 541.7 V555.0" stroke="#5ca8f8" stroke-width="1.9" fill="none"/><g stroke="#5ca8f8" stroke-width="1.9" fill="none"><circle cx="960.9" cy="548" r="12.2" fill="#fff"/><path d="M960.9 560.2 V569"/></g><path d="M955.7 541.7 H966.1 M960.9 541.7 V555.0" stroke="#5ca8f8" stroke-width="1.9" fill="none"/><g stroke="#5ca8f8" stroke-width="1.9" fill="none"><circle cx="980.7" cy="548" r="12.2" fill="#fff"/><path d="M980.7 560.2 V569"/></g><path d="M975.5 541.7 H985.9 M980.7 541.7 V555.0" stroke="#5ca8f8" stroke-width="1.9" fill="none"/><g stroke="#5ca8f8" stroke-width="1.9" fill="none"><circle cx="1002.0" cy="548" r="12.2" fill="#fff"/><path d="M1002.0 560.2 V569"/></g><path d="M996.8 541.7 H1007.2 M1002.0 541.7 V555.0" stroke="#5ca8f8" stroke-width="1.9" fill="none"/><g stroke="#5ca8f8" stroke-width="1.9" fill="none"><circle cx="1028.9" cy="548" r="12.2" fill="#fff"/><path d="M1028.9 560.2 V569"/></g><path d="M1023.7 541.7 H1034.1 M1028.9 541.7 V555.0" stroke="#5ca8f8" stroke-width="1.9" fill="none"/><g stroke="#5ca8f8" stroke-width="1.9" fill="none"><circle cx="1046.8" cy="548" r="12.2" fill="#fff"/><path d="M1046.8 560.2 V569"/></g><path d="M1041.6 541.7 H1052.0 M1046.8 541.7 V555.0" stroke="#5ca8f8" stroke-width="1.9" fill="none"/><g stroke="#5ca8f8" stroke-width="1.9" fill="none"><circle cx="1085.8" cy="548" r="12.2" fill="#fff"/><path d="M1085.8 560.2 V569"/></g><path d="M1080.6 541.7 H1091.0 M1085.8 541.7 V555.0" stroke="#5ca8f8" stroke-width="1.9" fill="none"/><g stroke="#5ca8f8" stroke-width="1.9" fill="none"><circle cx="1135.8" cy="548" r="12.2" fill="#fff"/><path d="M1135.8 560.2 V569"/></g><path d="M1130.6 541.7 H1141.0 M1135.8 541.7 V555.0" stroke="#5ca8f8" stroke-width="1.9" fill="none"/><g stroke="#5ca8f8" stroke-width="1.9" fill="none"><circle cx="1149.0" cy="548" r="12.2" fill="#fff"/><path d="M1149.0 560.2 V569"/></g><path d="M1143.8 541.7 H1154.2 M1149.0 541.7 V555.0" stroke="#5ca8f8" stroke-width="1.9" fill="none"/><g stroke="#5ca8f8" stroke-width="1.9" fill="none"><circle cx="1177.9" cy="548" r="12.2" fill="#fff"/><path d="M1177.9 560.2 V569"/></g><path d="M1172.7 541.7 H1183.1 M1177.9 541.7 V555.0" stroke="#5ca8f8" stroke-width="1.9" fill="none"/><g stroke="#5ca8f8" stroke-width="1.9" fill="none"><circle cx="1192.8" cy="548" r="12.2" fill="#fff"/><path d="M1192.8 560.2 V569"/></g><path d="M1187.6 541.7 H1198.0 M1192.8 541.7 V555.0" stroke="#5ca8f8" stroke-width="1.9" fill="none"/><g stroke="#5ca8f8" stroke-width="1.9" fill="none"><circle cx="1244.7" cy="548" r="12.2" fill="#fff"/><path d="M1244.7 560.2 V569"/></g><path d="M1239.5 541.7 H1249.9 M1244.7 541.7 V555.0" stroke="#5ca8f8" stroke-width="1.9" fill="none"/><g stroke="#5ca8f8" stroke-width="1.9" fill="none"><circle cx="1253.7" cy="548" r="12.2" fill="#fff"/><path d="M1253.7 560.2 V569"/></g><path d="M1248.5 541.7 H1258.9 M1253.7 541.7 V555.0" stroke="#5ca8f8" stroke-width="1.9" fill="none"/><g stroke="#5ca8f8" stroke-width="1.9" fill="none"><circle cx="1265.7" cy="548" r="12.2" fill="#fff"/><path d="M1265.7 560.2 V569"/></g><path d="M1260.5 541.7 H1270.9 M1265.7 541.7 V555.0" stroke="#5ca8f8" stroke-width="1.9" fill="none"/><g stroke="#5ca8f8" stroke-width="1.9" fill="none"><circle cx="1282.0" cy="548" r="12.2" fill="#fff"/><path d="M1282.0 560.2 V569"/></g><path d="M1276.8 541.7 H1287.2 M1282.0 541.7 V555.0" stroke="#5ca8f8" stroke-width="1.9" fill="none"/><g stroke="#5ca8f8" stroke-width="1.9" fill="none"><circle cx="1318.4" cy="548" r="12.2" fill="#fff"/><path d="M1318.4 560.2 V569"/></g><path d="M1313.2 541.7 H1323.6 M1318.4 541.7 V555.0" stroke="#5ca8f8" stroke-width="1.9" fill="none"/><g stroke="#5ca8f8" stroke-width="1.9" fill="none"><circle cx="1363.7" cy="548" r="12.2" fill="#fff"/><path d="M1363.7 560.2 V569"/></g><path d="M1358.5 541.7 H1368.9 M1363.7 541.7 V555.0" stroke="#5ca8f8" stroke-width="1.9" fill="none"/><g stroke="#5ca8f8" stroke-width="1.9" fill="none"><circle cx="1367.2" cy="548" r="12.2" fill="#fff"/><path d="M1367.2 560.2 V569"/></g><path d="M1362.0 541.7 H1372.4 M1367.2 541.7 V555.0" stroke="#5ca8f8" stroke-width="1.9" fill="none"/><g stroke="#5ca8f8" stroke-width="1.9" fill="none"><circle cx="1377.9" cy="548" r="12.2" fill="#fff"/><path d="M1377.9 560.2 V569"/></g><path d="M1372.7 541.7 H1383.1 M1377.9 541.7 V555.0" stroke="#5ca8f8" stroke-width="1.9" fill="none"/><g stroke="#5ca8f8" stroke-width="1.9" fill="none"><circle cx="1401.9" cy="548" r="12.2" fill="#fff"/><path d="M1401.9 560.2 V569"/></g><path d="M1396.7 541.7 H1407.1 M1401.9 541.7 V555.0" stroke="#5ca8f8" stroke-width="1.9" fill="none"/><g stroke="#5ca8f8" stroke-width="1.9" fill="none"><circle cx="1427.0" cy="548" r="12.2" fill="#fff"/><path d="M1427.0 560.2 V569"/></g><path d="M1421.8 541.7 H1432.2 M1427.0 541.7 V555.0" stroke="#5ca8f8" stroke-width="1.9" fill="none"/><g stroke="#5ca8f8" stroke-width="1.9" fill="none"><circle cx="1443.7" cy="548" r="12.2" fill="#fff"/><path d="M1443.7 560.2 V569"/></g><path d="M1438.5 541.7 H1448.9 M1443.7 541.7 V555.0" stroke="#5ca8f8" stroke-width="1.9" fill="none"/><g stroke="#5ca8f8" stroke-width="1.9" fill="none"><circle cx="1465.7" cy="548" r="12.2" fill="#fff"/><path d="M1465.7 560.2 V569"/></g><path d="M1460.5 541.7 H1470.9 M1465.7 541.7 V555.0" stroke="#5ca8f8" stroke-width="1.9" fill="none"/><g stroke="#5ca8f8" stroke-width="1.9" fill="none"><circle cx="1486.7" cy="548" r="12.2" fill="#fff"/><path d="M1486.7 560.2 V569"/></g><path d="M1481.5 541.7 H1491.9 M1486.7 541.7 V555.0" stroke="#5ca8f8" stroke-width="1.9" fill="none"/><g stroke="#5ca8f8" stroke-width="1.9" fill="none"><circle cx="1512.9" cy="548" r="12.2" fill="#fff"/><path d="M1512.9 560.2 V569"/></g><path d="M1507.7 541.7 H1518.1 M1512.9 541.7 V555.0" stroke="#5ca8f8" stroke-width="1.9" fill="none"/><g stroke="#5ca8f8" stroke-width="1.9" fill="none"><circle cx="1528.7" cy="548" r="12.2" fill="#fff"/><path d="M1528.7 560.2 V569"/></g><path d="M1523.5 541.7 H1533.9 M1528.7 541.7 V555.0" stroke="#5ca8f8" stroke-width="1.9" fill="none"/><g stroke="#5ca8f8" stroke-width="1.9" fill="none"><circle cx="1561.8" cy="548" r="12.2" fill="#fff"/><path d="M1561.8 560.2 V569"/></g><path d="M1556.6 541.7 H1567.0 M1561.8 541.7 V555.0" stroke="#5ca8f8" stroke-width="1.9" fill="none"/><g stroke="#5ca8f8" stroke-width="1.9" fill="none"><circle cx="1569.8" cy="548" r="12.2" fill="#fff"/><path d="M1569.8 560.2 V569"/></g><path d="M1564.6 541.7 H1575.0 M1569.8 541.7 V555.0" stroke="#5ca8f8" stroke-width="1.9" fill="none"/><g stroke="#5ca8f8" stroke-width="1.9" fill="none"><circle cx="1610.0" cy="548" r="12.2" fill="#fff"/><path d="M1610.0 560.2 V569"/></g><path d="M1604.8 541.7 H1615.2 M1610.0 541.7 V555.0" stroke="#5ca8f8" stroke-width="1.9" fill="none"/><g stroke="#5ca8f8" stroke-width="1.9" fill="none"><circle cx="1649.9" cy="548" r="12.2" fill="#fff"/><path d="M1649.9 560.2 V569"/></g><path d="M1644.7 541.7 H1655.1 M1649.9 541.7 V555.0" stroke="#5ca8f8" stroke-width="1.9" fill="none"/><g stroke="#5ca8f8" stroke-width="1.9" fill="none"><circle cx="1653.9" cy="548" r="12.2" fill="#fff"/><path d="M1653.9 560.2 V569"/></g><path d="M1648.7 541.7 H1659.1 M1653.9 541.7 V555.0" stroke="#5ca8f8" stroke-width="1.9" fill="none"/><g stroke="#5ca8f8" stroke-width="1.9" fill="none"><circle cx="1693.0" cy="548" r="12.2" fill="#fff"/><path d="M1693.0 560.2 V569"/></g><path d="M1687.8 541.7 H1698.2 M1693.0 541.7 V555.0" stroke="#5ca8f8" stroke-width="1.9" fill="none"/><g stroke="#5ca8f8" stroke-width="1.9" fill="none"><circle cx="1698.7" cy="548" r="12.2" fill="#fff"/><path d="M1698.7 560.2 V569"/></g><path d="M1693.5 541.7 H1703.9 M1698.7 541.7 V555.0" stroke="#5ca8f8" stroke-width="1.9" fill="none"/><g stroke="#5ca8f8" stroke-width="1.9" fill="none"><circle cx="1733.2" cy="548" r="12.2" fill="#fff"/><path d="M1733.2 560.2 V569"/></g><path d="M1728.0 541.7 H1738.4 M1733.2 541.7 V555.0" stroke="#5ca8f8" stroke-width="1.9" fill="none"/><g stroke="#5ca8f8" stroke-width="1.9" fill="none"><circle cx="1739.8" cy="548" r="12.2" fill="#fff"/><path d="M1739.8 560.2 V569"/></g><path d="M1734.6 541.7 H1745.0 M1739.8 541.7 V555.0" stroke="#5ca8f8" stroke-width="1.9" fill="none"/><g stroke="#5ca8f8" stroke-width="1.9" fill="none"><circle cx="1780.5" cy="548" r="12.2" fill="#fff"/><path d="M1780.5 560.2 V569"/></g><path d="M1775.3 541.7 H1785.7 M1780.5 541.7 V555.0" stroke="#5ca8f8" stroke-width="1.9" fill="none"/><g stroke="#5ca8f8" stroke-width="1.9" fill="none"><circle cx="1785.6" cy="548" r="12.2" fill="#fff"/><path d="M1785.6 560.2 V569"/></g><path d="M1780.4 541.7 H1790.8 M1785.6 541.7 V555.0" stroke="#5ca8f8" stroke-width="1.9" fill="none"/><g stroke="#5ca8f8" stroke-width="1.9" fill="none"><circle cx="1823.9" cy="548" r="12.2" fill="#fff"/><path d="M1823.9 560.2 V569"/></g><path d="M1818.7 541.7 H1829.1 M1823.9 541.7 V555.0" stroke="#5ca8f8" stroke-width="1.9" fill="none"/><g stroke="#5ca8f8" stroke-width="1.9" fill="none"><circle cx="1834.0" cy="548" r="12.2" fill="#fff"/><path d="M1834.0 560.2 V569"/></g><path d="M1828.8 541.7 H1839.2 M1834.0 541.7 V555.0" stroke="#5ca8f8" stroke-width="1.9" fill="none"/><g stroke="#5ca8f8" stroke-width="1.9" fill="none"><circle cx="1866.9" cy="548" r="12.2" fill="#fff"/><path d="M1866.9 560.2 V569"/></g><path d="M1861.7 541.7 H1872.1 M1866.9 541.7 V555.0" stroke="#5ca8f8" stroke-width="1.9" fill="none"/><g stroke="#5ca8f8" stroke-width="1.9" fill="none"><circle cx="1887.8" cy="548" r="12.2" fill="#fff"/><path d="M1887.8 560.2 V569"/></g><path d="M1882.6 541.7 H1893.0 M1887.8 541.7 V555.0" stroke="#5ca8f8" stroke-width="1.9" fill="none"/><g stroke="#5ca8f8" stroke-width="1.9" fill="none"><circle cx="1905.1" cy="548" r="12.2" fill="#fff"/><path d="M1905.1 560.2 V569"/></g><path d="M1899.9 541.7 H1910.3 M1905.1 541.7 V555.0" stroke="#5ca8f8" stroke-width="1.9" fill="none"/><g stroke="#5ca8f8" stroke-width="1.9" fill="none"><circle cx="1941.9" cy="548" r="12.2" fill="#fff"/><path d="M1941.9 560.2 V569"/></g><path d="M1936.7 541.7 H1947.1 M1941.9 541.7 V555.0" stroke="#5ca8f8" stroke-width="1.9" fill="none"/><g stroke="#5ca8f8" stroke-width="1.9" fill="none"><circle cx="1957.0" cy="548" r="12.2" fill="#fff"/><path d="M1957.0 560.2 V569"/></g><path d="M1951.8 541.7 H1962.2 M1957.0 541.7 V555.0" stroke="#5ca8f8" stroke-width="1.9" fill="none"/><g stroke="#5ca8f8" stroke-width="1.9" fill="none"><circle cx="1980.8" cy="548" r="12.2" fill="#fff"/><path d="M1980.8 560.2 V569"/></g><path d="M1975.6 541.7 H1986.0 M1980.8 541.7 V555.0" stroke="#5ca8f8" stroke-width="1.9" fill="none"/><g stroke="#5ca8f8" stroke-width="1.9" fill="none"><circle cx="1996.9" cy="548" r="12.2" fill="#fff"/><path d="M1996.9 560.2 V569"/></g><path d="M1991.7 541.7 H2002.1 M1996.9 541.7 V555.0" stroke="#5ca8f8" stroke-width="1.9" fill="none"/><g stroke="#5ca8f8" stroke-width="1.9" fill="none"><circle cx="2014.9" cy="548" r="12.2" fill="#fff"/><path d="M2014.9 560.2 V569"/></g><path d="M2009.7 541.7 H2020.1 M2014.9 541.7 V555.0" stroke="#5ca8f8" stroke-width="1.9" fill="none"/><g stroke="#5ca8f8" stroke-width="1.9" fill="none"><circle cx="2040.0" cy="548" r="12.2" fill="#fff"/><path d="M2040.0 560.2 V569"/></g><path d="M2034.8 541.7 H2045.2 M2040.0 541.7 V555.0" stroke="#5ca8f8" stroke-width="1.9" fill="none"/><g stroke="#5ca8f8" stroke-width="1.9" fill="none"><circle cx="2072.9" cy="548" r="12.2" fill="#fff"/><path d="M2072.9 560.2 V569"/></g><path d="M2067.7 541.7 H2078.1 M2072.9 541.7 V555.0" stroke="#5ca8f8" stroke-width="1.9" fill="none"/><g stroke="#5ca8f8" stroke-width="1.9" fill="none"><circle cx="2083.0" cy="548" r="12.2" fill="#fff"/><path d="M2083.0 560.2 V569"/></g><path d="M2077.8 541.7 H2088.2 M2083.0 541.7 V555.0" stroke="#5ca8f8" stroke-width="1.9" fill="none"/><g stroke="#5ca8f8" stroke-width="1.9" fill="none"><circle cx="2097.0" cy="548" r="12.2" fill="#fff"/><path d="M2097.0 560.2 V569"/></g><path d="M2091.8 541.7 H2102.2 M2097.0 541.7 V555.0" stroke="#5ca8f8" stroke-width="1.9" fill="none"/><g stroke="#5ca8f8" stroke-width="1.9" fill="none"><circle cx="2125.7" cy="548" r="12.2" fill="#fff"/><path d="M2125.7 560.2 V569"/></g><path d="M2120.5 541.7 H2130.9 M2125.7 541.7 V555.0" stroke="#5ca8f8" stroke-width="1.9" fill="none"/><g stroke="#5ca8f8" stroke-width="1.9" fill="none"><circle cx="2152.9" cy="548" r="12.2" fill="#fff"/><path d="M2152.9 560.2 V569"/></g><path d="M2147.7 541.7 H2158.1 M2152.9 541.7 V555.0" stroke="#5ca8f8" stroke-width="1.9" fill="none"/><g stroke="#5ca8f8" stroke-width="1.9" fill="none"><circle cx="2167.0" cy="548" r="12.2" fill="#fff"/><path d="M2167.0 560.2 V569"/></g><path d="M2161.8 541.7 H2172.2 M2167.0 541.7 V555.0" stroke="#5ca8f8" stroke-width="1.9" fill="none"/><g stroke="#5ca8f8" stroke-width="1.9" fill="none"><circle cx="2175.0" cy="548" r="12.2" fill="#fff"/><path d="M2175.0 560.2 V569"/></g><path d="M2169.8 541.7 H2180.2 M2175.0 541.7 V555.0" stroke="#5ca8f8" stroke-width="1.9" fill="none"/><g stroke="#5ca8f8" stroke-width="1.9" fill="none"><circle cx="2209.8" cy="548" r="12.2" fill="#fff"/><path d="M2209.8 560.2 V569"/></g><path d="M2204.6 541.7 H2215.0 M2209.8 541.7 V555.0" stroke="#5ca8f8" stroke-width="1.9" fill="none"/><g stroke="#5ca8f8" stroke-width="1.9" fill="none"><circle cx="2244.0" cy="548" r="12.2" fill="#fff"/><path d="M2244.0 560.2 V569"/></g><path d="M2238.8 541.7 H2249.2 M2244.0 541.7 V555.0" stroke="#5ca8f8" stroke-width="1.9" fill="none"/><g stroke="#5ca8f8" stroke-width="1.9" fill="none"><circle cx="2247.8" cy="548" r="12.2" fill="#fff"/><path d="M2247.8 560.2 V569"/></g><path d="M2242.6 541.7 H2253.0 M2247.8 541.7 V555.0" stroke="#5ca8f8" stroke-width="1.9" fill="none"/><g stroke="#5ca8f8" stroke-width="1.9" fill="none"><circle cx="2283.9" cy="548" r="12.2" fill="#fff"/><path d="M2283.9 560.2 V569"/></g><path d="M2278.7 541.7 H2289.1 M2283.9 541.7 V555.0" stroke="#5ca8f8" stroke-width="1.9" fill="none"/><g stroke="#5ca8f8" stroke-width="1.9" fill="none"><circle cx="2294.0" cy="548" r="12.2" fill="#fff"/><path d="M2294.0 560.2 V569"/></g><path d="M2288.8 541.7 H2299.2 M2294.0 541.7 V555.0" stroke="#5ca8f8" stroke-width="1.9" fill="none"/><g stroke="#5ca8f8" stroke-width="1.9" fill="none"><circle cx="2318.0" cy="548" r="12.2" fill="#fff"/><path d="M2318.0 560.2 V569"/></g><path d="M2312.8 541.7 H2323.2 M2318.0 541.7 V555.0" stroke="#5ca8f8" stroke-width="1.9" fill="none"/><g stroke="#5ca8f8" stroke-width="1.9" fill="none"><circle cx="2336.7" cy="548" r="12.2" fill="#fff"/><path d="M2336.7 560.2 V569"/></g><path d="M2331.5 541.7 H2341.9 M2336.7 541.7 V555.0" stroke="#5ca8f8" stroke-width="1.9" fill="none"/><g stroke="#5ca8f8" stroke-width="1.9" fill="none"><circle cx="2352.8" cy="548" r="12.2" fill="#fff"/><path d="M2352.8 560.2 V569"/></g><path d="M2347.6 541.7 H2358.0 M2352.8 541.7 V555.0" stroke="#5ca8f8" stroke-width="1.9" fill="none"/><g stroke="#5ca8f8" stroke-width="1.9" fill="none"><circle cx="2378.0" cy="548" r="12.2" fill="#fff"/><path d="M2378.0 560.2 V569"/></g><path d="M2372.8 541.7 H2383.2 M2378.0 541.7 V555.0" stroke="#5ca8f8" stroke-width="1.9" fill="none"/><g stroke="#5ca8f8" stroke-width="1.9" fill="none"><circle cx="2415.0" cy="548" r="12.2" fill="#fff"/><path d="M2415.0 560.2 V569"/></g><path d="M2409.8 541.7 H2420.2 M2415.0 541.7 V555.0" stroke="#5ca8f8" stroke-width="1.9" fill="none"/><g stroke="#5ca8f8" stroke-width="1.9" fill="none"><circle cx="2438.9" cy="548" r="12.2" fill="#fff"/><path d="M2438.9 560.2 V569"/></g><path d="M2433.7 541.7 H2444.1 M2438.9 541.7 V555.0" stroke="#5ca8f8" stroke-width="1.9" fill="none"/><rect x="770.05" y="604" width="2.5" height="49.5" rx="1.25" fill="#ca97e8"/><rect x="770.05" y="656" width="2.5" height="47.5" rx="1.25" fill="#ca97e8"/><rect x="803.05" y="604" width="1.7" height="49.5" rx="0.85" fill="#ca97e8"/><rect x="803.05" y="656" width="1.7" height="47.5" rx="0.85" fill="#ca97e8"/><rect x="811.10" y="604" width="2.4" height="49.5" rx="1.2" fill="#ca97e8"/><rect x="811.10" y="656" width="2.4" height="47.5" rx="1.2" fill="#ca97e8"/><rect x="856.25" y="604" width="3.5" height="49.5" rx="1.75" fill="#ca97e8"/><rect x="856.25" y="656" width="3.5" height="47.5" rx="1.75" fill="#ca97e8"/><rect x="886.20" y="604" width="2.4" height="49.5" rx="1.2" fill="#ca97e8"/><rect x="886.20" y="656" width="2.4" height="47.5" rx="1.2" fill="#ca97e8"/><rect x="938.20" y="604" width="2.4" height="49.5" rx="1.2" fill="#ca97e8"/><rect x="938.20" y="656" width="2.4" height="47.5" rx="1.2" fill="#ca97e8"/><rect x="970.85" y="604" width="1.7" height="49.5" rx="0.85" fill="#ca97e8"/><rect x="970.85" y="656" width="1.7" height="47.5" rx="0.85" fill="#ca97e8"/><rect x="979.00" y="604" width="2.4" height="49.5" rx="1.2" fill="#ca97e8"/><rect x="979.00" y="656" width="2.4" height="47.5" rx="1.2" fill="#ca97e8"/><rect x="1025.25" y="604" width="3.5" height="49.5" rx="1.75" fill="#ca97e8"/><rect x="1025.25" y="656" width="3.5" height="47.5" rx="1.75" fill="#ca97e8"/><rect x="1070.20" y="604" width="6.6" height="49.5" rx="2.5" fill="#ca97e8"/><rect x="1076.15" y="656" width="1.7" height="47.5" rx="0.85" fill="#ca97e8"/><rect x="1084.10" y="604" width="2.4" height="49.5" rx="1.2" fill="#ca97e8"/><rect x="1084.10" y="656" width="2.4" height="47.5" rx="1.2" fill="#ca97e8"/><rect x="1139.10" y="604" width="2.4" height="49.5" rx="1.2" fill="#ca97e8"/><rect x="1140.85" y="656" width="1.7" height="47.5" rx="0.85" fill="#ca97e8"/><rect x="1148.80" y="604" width="2" height="49.5" rx="1.0" fill="#ca97e8"/><rect x="1148.80" y="656" width="2" height="47.5" rx="1.0" fill="#ca97e8"/><rect x="1191.10" y="604" width="2.4" height="49.5" rx="1.2" fill="#ca97e8"/><rect x="1191.30" y="656" width="2" height="47.5" rx="1.0" fill="#ca97e8"/><rect x="1228.05" y="604" width="3.5" height="49.5" rx="1.75" fill="#ca97e8"/><rect x="1228.05" y="656" width="3.5" height="47.5" rx="1.75" fill="#ca97e8"/><rect x="1241.05" y="604" width="3.5" height="49.5" rx="1.75" fill="#ca97e8"/><rect x="1241.05" y="656" width="3.5" height="47.5" rx="1.75" fill="#ca97e8"/><rect x="1278.40" y="604" width="2.4" height="49.5" rx="1.2" fill="#ca97e8"/><rect x="1278.40" y="656" width="2.4" height="47.5" rx="1.2" fill="#ca97e8"/><rect x="1317.20" y="604" width="2.4" height="49.5" rx="1.2" fill="#ca97e8"/><rect x="1317.20" y="656" width="2.4" height="47.5" rx="1.2" fill="#ca97e8"/><rect x="1400.50" y="604" width="2.4" height="49.5" rx="1.2" fill="#ca97e8"/><rect x="1400.85" y="656" width="1.7" height="47.5" rx="0.85" fill="#ca97e8"/><rect x="1442.10" y="604" width="2.4" height="49.5" rx="1.2" fill="#ca97e8"/><rect x="1442.10" y="656" width="2.4" height="47.5" rx="1.2" fill="#ca97e8"/><rect x="1485.00" y="604" width="2.4" height="49.5" rx="1.2" fill="#ca97e8"/><rect x="1485.35" y="656" width="1.7" height="47.5" rx="0.85" fill="#ca97e8"/><rect x="1527.10" y="604" width="2.4" height="49.5" rx="1.2" fill="#ca97e8"/><rect x="1527.10" y="656" width="2.4" height="47.5" rx="1.2" fill="#ca97e8"/><rect x="1568.10" y="604" width="2.4" height="49.5" rx="1.2" fill="#ca97e8"/><rect x="1568.10" y="656" width="2.4" height="47.5" rx="1.2" fill="#ca97e8"/><rect x="1611.10" y="604" width="2.4" height="49.5" rx="1.2" fill="#ca97e8"/><rect x="1611.45" y="656" width="1.7" height="47.5" rx="0.85" fill="#ca97e8"/><rect x="1652.90" y="604" width="2.4" height="49.5" rx="1.2" fill="#ca97e8"/><rect x="1653.25" y="656" width="1.7" height="47.5" rx="0.85" fill="#ca97e8"/><rect x="1697.30" y="604" width="2.4" height="49.5" rx="1.2" fill="#ca97e8"/><rect x="1697.30" y="656" width="2.4" height="47.5" rx="1.2" fill="#ca97e8"/><rect x="1738.30" y="604" width="3" height="49.5" rx="1.5" fill="#ca97e8"/><rect x="1738.60" y="656" width="2.4" height="47.5" rx="1.2" fill="#ca97e8"/><rect x="1779.30" y="604" width="2.4" height="49.5" rx="1.2" fill="#ca97e8"/><rect x="1779.30" y="656" width="2.4" height="47.5" rx="1.2" fill="#ca97e8"/><rect x="1822.20" y="604" width="2.4" height="49.5" rx="1.2" fill="#ca97e8"/><rect x="1822.20" y="656" width="2.4" height="47.5" rx="1.2" fill="#ca97e8"/><rect x="1865.20" y="604" width="2.4" height="49.5" rx="1.2" fill="#ca97e8"/><rect x="1865.20" y="656" width="2.4" height="47.5" rx="1.2" fill="#ca97e8"/><rect x="1906.60" y="604" width="2.4" height="49.5" rx="1.2" fill="#ca97e8"/><rect x="1906.95" y="656" width="1.7" height="47.5" rx="0.85" fill="#ca97e8"/><rect x="1952.40" y="604" width="3" height="49.5" rx="1.5" fill="#ca97e8"/><rect x="1952.40" y="656" width="3" height="47.5" rx="1.5" fill="#ca97e8"/><rect x="1993.30" y="604" width="3" height="49.5" rx="1.5" fill="#ca97e8"/><rect x="1993.30" y="656" width="3" height="47.5" rx="1.5" fill="#ca97e8"/><rect x="2036.20" y="604" width="5" height="49.5" rx="2.5" fill="#ca97e8"/><rect x="2037.50" y="656" width="2.4" height="47.5" rx="1.2" fill="#ca97e8"/><rect x="2078.30" y="604" width="5" height="49.5" rx="2.5" fill="#ca97e8"/><rect x="2078.30" y="656" width="5" height="47.5" rx="2.5" fill="#ca97e8"/><rect x="2122.30" y="604" width="5" height="49.5" rx="2.5" fill="#ca97e8"/><rect x="2123.60" y="656" width="2.4" height="47.5" rx="1.2" fill="#ca97e8"/><rect x="2161.20" y="604" width="5" height="49.5" rx="2.5" fill="#ca97e8"/><rect x="2162.50" y="656" width="2.4" height="47.5" rx="1.2" fill="#ca97e8"/><rect x="2205.50" y="604" width="5" height="49.5" rx="2.5" fill="#ca97e8"/><rect x="2205.50" y="656" width="5" height="47.5" rx="2.5" fill="#ca97e8"/><rect x="2245.40" y="604" width="3" height="49.5" rx="1.5" fill="#ca97e8"/><rect x="2245.40" y="656" width="3" height="47.5" rx="1.5" fill="#ca97e8"/><rect x="2288.10" y="604" width="5" height="49.5" rx="2.5" fill="#ca97e8"/><rect x="2289.40" y="656" width="2.4" height="47.5" rx="1.2" fill="#ca97e8"/><rect x="2331.55" y="604" width="5.5" height="49.5" rx="2.5" fill="#ca97e8"/><rect x="2331.80" y="656" width="5" height="47.5" rx="2.5" fill="#ca97e8"/><rect x="2373.40" y="604" width="5" height="49.5" rx="2.5" fill="#ca97e8"/><rect x="2373.40" y="656" width="5" height="47.5" rx="2.5" fill="#ca97e8"/><rect x="2414.50" y="604" width="3" height="49.5" rx="1.5" fill="#ca97e8"/><rect x="2414.50" y="656" width="3" height="47.5" rx="1.5" fill="#ca97e8"/><rect x="783.00" y="706" width="1.7" height="32" fill="#77d786"/><rect x="823.10" y="706" width="1.7" height="32" fill="#77d786"/><rect x="896.10" y="706" width="1.7" height="32" fill="#77d786"/><rect x="903.40" y="706" width="1.7" height="32" fill="#77d786"/><rect x="905.30" y="706" width="1.7" height="32" fill="#77d786"/><rect x="951.10" y="706" width="1.7" height="32" fill="#77d786"/><rect x="990.80" y="706" width="1.7" height="32" fill="#77d786"/><rect x="1036.80" y="706" width="1.7" height="32" fill="#77d786"/><rect x="1078.20" y="706" width="1.7" height="32" fill="#77d786"/><rect x="1119.20" y="706" width="1.7" height="32" fill="#77d786"/><rect x="1162.00" y="706" width="1.7" height="32" fill="#77d786"/><rect x="1207.10" y="706" width="1.7" height="32" fill="#77d786"/><rect x="1247.20" y="706" width="1.7" height="32" fill="#77d786"/><rect x="1289.00" y="706" width="1.7" height="32" fill="#77d786"/><rect x="1355.20" y="706" width="1.7" height="32" fill="#77d786"/><rect x="1370.00" y="706" width="1.7" height="32" fill="#77d786"/><rect x="1416.00" y="706" width="1.7" height="32" fill="#77d786"/><rect x="1454.20" y="706" width="1.7" height="32" fill="#77d786"/><rect x="1502.20" y="706" width="1.7" height="32" fill="#77d786"/><rect x="1544.00" y="706" width="1.7" height="32" fill="#77d786"/><rect x="1584.20" y="706" width="1.7" height="32" fill="#77d786"/><rect x="1624.20" y="706" width="1.7" height="32" fill="#77d786"/><rect x="1669.20" y="706" width="1.7" height="32" fill="#77d786"/><rect x="1709.20" y="706" width="1.7" height="32" fill="#77d786"/><rect x="1754.20" y="706" width="1.7" height="32" fill="#77d786"/><rect x="1795.00" y="706" width="1.7" height="32" fill="#77d786"/><rect x="1834.00" y="706" width="1.7" height="32" fill="#77d786"/><rect x="1882.20" y="706" width="1.7" height="32" fill="#77d786"/><rect x="1922.30" y="706" width="1.7" height="32" fill="#77d786"/><rect x="1963.20" y="706" width="1.7" height="32" fill="#77d786"/><rect x="2004.10" y="706" width="1.7" height="32" fill="#77d786"/><rect x="2051.20" y="706" width="1.7" height="32" fill="#77d786"/><rect x="2086.00" y="706" width="1.7" height="32" fill="#77d786"/><rect x="2132.60" y="706" width="1.7" height="32" fill="#77d786"/><rect x="2162.90" y="706" width="1.7" height="32" fill="#77d786"/><rect x="2220.30" y="706" width="1.7" height="32" fill="#77d786"/><rect x="2261.20" y="706" width="1.7" height="32" fill="#77d786"/><rect x="2299.20" y="706" width="1.7" height="32" fill="#77d786"/><rect x="2340.00" y="706" width="1.7" height="32" fill="#77d786"/><rect x="2385.00" y="706" width="1.7" height="32" fill="#77d786"/><rect x="2422.20" y="706" width="1.7" height="32" fill="#77d786"/><rect x="827.15" y="774.5" width="1.7" height="32" fill="#77d786"/><rect x="897.95" y="774.5" width="1.7" height="32" fill="#77d786"/><rect x="906.15" y="774.5" width="1.7" height="32" fill="#77d786"/><rect x="952.95" y="774.5" width="1.7" height="32" fill="#77d786"/><rect x="992.20" y="774.5" width="2" height="32" fill="#77d786"/><rect x="1040.05" y="774.5" width="1.7" height="32" fill="#77d786"/><rect x="1079.95" y="774.5" width="1.7" height="32" fill="#77d786"/><rect x="1125.75" y="774.5" width="1.7" height="32" fill="#77d786"/><rect x="1168.25" y="774.5" width="1.7" height="32" fill="#77d786"/><rect x="1240.80" y="774.5" width="3" height="32" fill="#77d786"/><rect x="1256.85" y="774.5" width="1.7" height="32" fill="#77d786"/><rect x="1354.15" y="774.5" width="3.5" height="32" fill="#77d786"/><rect x="1371.15" y="774.5" width="1.7" height="32" fill="#77d786"/><rect x="1419.05" y="774.5" width="1.7" height="32" fill="#77d786"/><rect x="1456.55" y="774.5" width="1.7" height="32" fill="#77d786"/><rect x="1503.10" y="774.5" width="3" height="32" fill="#77d786"/><rect x="1551.45" y="774.5" width="1.7" height="32" fill="#77d786"/><rect x="1596.65" y="774.5" width="1.7" height="32" fill="#77d786"/><rect x="1636.55" y="774.5" width="1.7" height="32" fill="#77d786"/><rect x="1682.35" y="774.5" width="1.7" height="32" fill="#77d786"/><rect x="1722.45" y="774.5" width="1.7" height="32" fill="#77d786"/><rect x="1772.75" y="774.5" width="3.5" height="32" fill="#77d786"/><rect x="1818.40" y="774.5" width="3" height="32" fill="#77d786"/><rect x="1869.15" y="774.5" width="4.5" height="32" fill="#77d786"/><rect x="1894.65" y="774.5" width="1.7" height="32" fill="#77d786"/><rect x="1931.15" y="774.5" width="1.7" height="32" fill="#77d786"/><rect x="1971.15" y="774.5" width="1.7" height="32" fill="#77d786"/><rect x="2006.15" y="774.5" width="1.7" height="32" fill="#77d786"/><rect x="2062.45" y="774.5" width="1.7" height="32" fill="#77d786"/><rect x="2088.85" y="774.5" width="1.7" height="32" fill="#77d786"/><rect x="2142.95" y="774.5" width="1.7" height="32" fill="#77d786"/><rect x="2165.05" y="774.5" width="1.7" height="32" fill="#77d786"/><rect x="2233.55" y="774.5" width="1.7" height="32" fill="#77d786"/><rect x="2273.45" y="774.5" width="1.7" height="32" fill="#77d786"/><rect x="2308.25" y="774.5" width="1.7" height="32" fill="#77d786"/><rect x="2344.15" y="774.5" width="1.7" height="32" fill="#77d786"/><rect x="2397.65" y="774.5" width="1.7" height="32" fill="#77d786"/><rect x="2427.50" y="774.5" width="3" height="32" fill="#77d786"/><rect x="785.90" y="740.5" width="42.00" height="31" rx="5.0" fill="#80de90" stroke="#5cb96b" stroke-width="1"/><text x="790.2" y="763.2" font-family="Liberation Sans" font-size="20.5" letter-spacing="-0.5" fill="#0d5518" stroke="#0d5518" stroke-width="0.35">C...</text><rect x="830.30" y="740.5" width="68.40" height="31" rx="5.0" fill="#80de90" stroke="#5cb96b" stroke-width="1"/><text x="834.6" y="763.2" font-family="Liberation Sans" font-size="20.5" letter-spacing="-0.5" fill="#0d5518" stroke="#0d5518" stroke-width="0.35">Com...</text><rect x="900.50" y="740.5" width="7.00" height="31" rx="3.5" fill="#80de90" stroke="#5cb96b" stroke-width="1"/><rect x="909.20" y="740.5" width="44.60" height="31" rx="5.0" fill="#80de90" stroke="#5cb96b" stroke-width="1"/><text x="913.5" y="763.2" font-family="Liberation Sans" font-size="20.5" letter-spacing="-0.5" fill="#0d5518" stroke="#0d5518" stroke-width="0.35">C...</text><rect x="955.20" y="740.5" width="39.60" height="31" rx="5.0" fill="#80de90" stroke="#5cb96b" stroke-width="1"/><text x="959.5" y="763.2" font-family="Liberation Sans" font-size="20.5" letter-spacing="-0.5" fill="#0d5518" stroke="#0d5518" stroke-width="0.35">C...</text><rect x="996.30" y="740.5" width="44.40" height="31" rx="5.0" fill="#80de90" stroke="#5cb96b" stroke-width="1"/><text x="1000.6" y="763.2" font-family="Liberation Sans" font-size="20.5" letter-spacing="-0.5" fill="#0d5518" stroke="#0d5518" stroke-width="0.35">C...</text><rect x="1042.10" y="740.5" width="38.00" height="31" rx="5.0" fill="#80de90" stroke="#5cb96b" stroke-width="1"/><rect x="1081.80" y="740.5" width="44.80" height="31" rx="5.0" fill="#80de90" stroke="#5cb96b" stroke-width="1"/><text x="1086.1" y="763.2" font-family="Liberation Sans" font-size="20.5" letter-spacing="-0.5" fill="#0d5518" stroke="#0d5518" stroke-width="0.35">C...</text><rect x="1128.30" y="740.5" width="40.30" height="31" rx="5.0" fill="#80de90" stroke="#5cb96b" stroke-width="1"/><text x="1132.6" y="763.2" font-family="Liberation Sans" font-size="20.5" letter-spacing="-0.5" fill="#0d5518" stroke="#0d5518" stroke-width="0.35">C...</text><rect x="1170.80" y="740.5" width="72.70" height="31" rx="5.0" fill="#80de90" stroke="#5cb96b" stroke-width="1"/><text x="1175.1" y="763.2" font-family="Liberation Sans" font-size="20.5" letter-spacing="-0.5" fill="#0d5518" stroke="#0d5518" stroke-width="0.35">Com...</text><rect x="1245.00" y="740.5" width="12.70" height="31" rx="5.0" fill="#80de90" stroke="#5cb96b" stroke-width="1"/><rect x="1259.40" y="740.5" width="94.30" height="31" rx="5.0" fill="#80de90" stroke="#5cb96b" stroke-width="1"/><text x="1263.7" y="763.2" font-family="Liberation Sans" font-size="20.5" letter-spacing="-0.5" fill="#0d5518" stroke="#0d5518" stroke-width="0.35">Comm...</text><rect x="1355.50" y="740.5" width="1.80" height="31" rx="0.9" fill="#80de90" stroke="#5cb96b" stroke-width="1"/><rect x="1359.00" y="740.5" width="12.90" height="31" rx="5.0" fill="#80de90" stroke="#5cb96b" stroke-width="1"/><rect x="1373.40" y="740.5" width="45.30" height="31" rx="5.0" fill="#80de90" stroke="#5cb96b" stroke-width="1"/><text x="1377.7" y="763.2" font-family="Liberation Sans" font-size="20.5" letter-spacing="-0.5" fill="#0d5518" stroke="#0d5518" stroke-width="0.35">C...</text><rect x="1420.90" y="740.5" width="36.70" height="31" rx="5.0" fill="#80de90" stroke="#5cb96b" stroke-width="1"/><rect x="1459.30" y="740.5" width="45.60" height="31" rx="5.0" fill="#80de90" stroke="#5cb96b" stroke-width="1"/><text x="1463.6" y="763.2" font-family="Liberation Sans" font-size="20.5" letter-spacing="-0.5" fill="#0d5518" stroke="#0d5518" stroke-width="0.35">C...</text><rect x="1506.80" y="740.5" width="46.00" height="31" rx="5.0" fill="#80de90" stroke="#5cb96b" stroke-width="1"/><text x="1511.1" y="763.2" font-family="Liberation Sans" font-size="20.5" letter-spacing="-0.5" fill="#0d5518" stroke="#0d5518" stroke-width="0.35">C...</text><rect x="1554.70" y="740.5" width="43.90" height="31" rx="5.0" fill="#80de90" stroke="#5cb96b" stroke-width="1"/><text x="1559.0" y="763.2" font-family="Liberation Sans" font-size="20.5" letter-spacing="-0.5" fill="#0d5518" stroke="#0d5518" stroke-width="0.35">C...</text><rect x="1600.30" y="740.5" width="37.20" height="31" rx="5.0" fill="#80de90" stroke="#5cb96b" stroke-width="1"/><rect x="1639.30" y="740.5" width="45.00" height="31" rx="5.0" fill="#80de90" stroke="#5cb96b" stroke-width="1"/><text x="1643.6" y="763.2" font-family="Liberation Sans" font-size="20.5" letter-spacing="-0.5" fill="#0d5518" stroke="#0d5518" stroke-width="0.35">C...</text><rect x="1686.00" y="740.5" width="37.80" height="31" rx="5.0" fill="#80de90" stroke="#5cb96b" stroke-width="1"/><rect x="1725.50" y="740.5" width="49.30" height="31" rx="5.0" fill="#80de90" stroke="#5cb96b" stroke-width="1"/><text x="1729.8" y="763.2" font-family="Liberation Sans" font-size="20.5" letter-spacing="-0.5" fill="#0d5518" stroke="#0d5518" stroke-width="0.35">Co...</text><rect x="1776.90" y="740.5" width="43.60" height="31" rx="5.0" fill="#80de90" stroke="#5cb96b" stroke-width="1"/><text x="1781.2" y="763.2" font-family="Liberation Sans" font-size="20.5" letter-spacing="-0.5" fill="#0d5518" stroke="#0d5518" stroke-width="0.35">C...</text><rect x="1822.30" y="740.5" width="50.20" height="31" rx="5.0" fill="#80de90" stroke="#5cb96b" stroke-width="1"/><text x="1826.6" y="763.2" font-family="Liberation Sans" font-size="20.5" letter-spacing="-0.5" fill="#0d5518" stroke="#0d5518" stroke-width="0.35">Co...</text><rect x="1874.70" y="740.5" width="21.00" height="31" rx="5.0" fill="#80de90" stroke="#5cb96b" stroke-width="1"/><rect x="1898.20" y="740.5" width="35.50" height="31" rx="5.0" fill="#80de90" stroke="#5cb96b" stroke-width="1"/><rect x="1935.40" y="740.5" width="36.00" height="31" rx="5.0" fill="#80de90" stroke="#5cb96b" stroke-width="1"/><rect x="1973.20" y="740.5" width="33.80" height="31" rx="5.0" fill="#80de90" stroke="#5cb96b" stroke-width="1"/><rect x="2009.00" y="740.5" width="55.00" height="31" rx="5.0" fill="#80de90" stroke="#5cb96b" stroke-width="1"/><text x="2013.3" y="763.2" font-family="Liberation Sans" font-size="20.5" letter-spacing="-0.5" fill="#0d5518" stroke="#0d5518" stroke-width="0.35">Co...</text><rect x="2065.90" y="740.5" width="24.50" height="31" rx="5.0" fill="#80de90" stroke="#5cb96b" stroke-width="1"/><rect x="2092.10" y="740.5" width="50.70" height="31" rx="5.0" fill="#80de90" stroke="#5cb96b" stroke-width="1"/><text x="2096.4" y="763.2" font-family="Liberation Sans" font-size="20.5" letter-spacing="-0.5" fill="#0d5518" stroke="#0d5518" stroke-width="0.35">Co...</text><rect x="2144.70" y="740.5" width="21.40" height="31" rx="5.0" fill="#80de90" stroke="#5cb96b" stroke-width="1"/><rect x="2168.10" y="740.5" width="66.50" height="31" rx="5.0" fill="#80de90" stroke="#5cb96b" stroke-width="1"/><text x="2172.4" y="763.2" font-family="Liberation Sans" font-size="20.5" letter-spacing="-0.5" fill="#0d5518" stroke="#0d5518" stroke-width="0.35">Com...</text><rect x="2236.30" y="740.5" width="37.90" height="31" rx="5.0" fill="#80de90" stroke="#5cb96b" stroke-width="1"/><rect x="2276.20" y="740.5" width="32.90" height="31" rx="5.0" fill="#80de90" stroke="#5cb96b" stroke-width="1"/><rect x="2311.30" y="740.5" width="33.10" height="31" rx="5.0" fill="#80de90" stroke="#5cb96b" stroke-width="1"/><rect x="2346.10" y="740.5" width="53.10" height="31" rx="5.0" fill="#80de90" stroke="#5cb96b" stroke-width="1"/><text x="2350.4" y="763.2" font-family="Liberation Sans" font-size="20.5" letter-spacing="-0.5" fill="#0d5518" stroke="#0d5518" stroke-width="0.35">Co...</text><rect x="2400.90" y="740.5" width="28.40" height="31" rx="5.0" fill="#80de90" stroke="#5cb96b" stroke-width="1"/><rect x="2431.50" y="740.5" width="38.00" height="31" rx="5.0" fill="#80de90" stroke="#5cb96b" stroke-width="1"/><text x="2435.8" y="763.2" font-family="Liberation Sans" font-size="20.5" letter-spacing="-0.5" fill="#0d5518" stroke="#0d5518" stroke-width="0.35">C</text><rect x="771.20" y="808.5" width="2.4" height="23" rx="1.2" fill="#ca97e8"/><rect x="771.20" y="834" width="2.4" height="20" rx="1.2" fill="#ca97e8"/><rect x="803.10" y="808.5" width="2.4" height="23" rx="1.2" fill="#ca97e8"/><rect x="803.10" y="834" width="2.4" height="20" rx="1.2" fill="#ca97e8"/><rect x="811.80" y="808.5" width="2.4" height="23" rx="1.2" fill="#ca97e8"/><rect x="811.80" y="834" width="2.4" height="20" rx="1.2" fill="#ca97e8"/><rect x="859.90" y="808.5" width="11" height="23" rx="3" fill="#ca97e8"/><rect x="859.90" y="834" width="11" height="20" rx="3" fill="#ca97e8"/><rect x="887.70" y="808.5" width="2.4" height="23" rx="1.2" fill="#ca97e8"/><rect x="887.70" y="834" width="2.4" height="20" rx="1.2" fill="#ca97e8"/><rect x="938.80" y="808.5" width="2.4" height="23" rx="1.2" fill="#ca97e8"/><rect x="938.80" y="834" width="2.4" height="20" rx="1.2" fill="#ca97e8"/><rect x="971.00" y="808.5" width="2.4" height="23" rx="1.2" fill="#ca97e8"/><rect x="971.00" y="834" width="2.4" height="20" rx="1.2" fill="#ca97e8"/><rect x="980.20" y="808.5" width="2.4" height="23" rx="1.2" fill="#ca97e8"/><rect x="980.20" y="834" width="2.4" height="20" rx="1.2" fill="#ca97e8"/><rect x="1028.30" y="808.5" width="3" height="23" rx="1.5" fill="#ca97e8"/><rect x="1028.30" y="834" width="3" height="20" rx="1.5" fill="#ca97e8"/><rect x="1075.80" y="808.5" width="2.4" height="23" rx="1.2" fill="#ca97e8"/><rect x="1075.80" y="834" width="2.4" height="20" rx="1.2" fill="#ca97e8"/><rect x="1140.80" y="808.5" width="2.4" height="23" rx="1.2" fill="#ca97e8"/><rect x="1140.80" y="834" width="2.4" height="20" rx="1.2" fill="#ca97e8"/><rect x="1149.00" y="808.5" width="2.4" height="23" rx="1.2" fill="#ca97e8"/><rect x="1149.00" y="834" width="2.4" height="20" rx="1.2" fill="#ca97e8"/><rect x="1192.00" y="808.5" width="2.4" height="23" rx="1.2" fill="#ca97e8"/><rect x="1192.00" y="834" width="2.4" height="20" rx="1.2" fill="#ca97e8"/><rect x="1231.40" y="808.5" width="3" height="23" rx="1.5" fill="#ca97e8"/><rect x="1231.40" y="834" width="3" height="20" rx="1.5" fill="#ca97e8"/><rect x="1243.50" y="808.5" width="2.4" height="23" rx="1.2" fill="#ca97e8"/><rect x="1243.50" y="834" width="2.4" height="20" rx="1.2" fill="#ca97e8"/><rect x="1281.00" y="808.5" width="3" height="23" rx="1.5" fill="#ca97e8"/><rect x="1281.00" y="834" width="3" height="20" rx="1.5" fill="#ca97e8"/><rect x="1317.20" y="808.5" width="2.4" height="23" rx="1.2" fill="#ca97e8"/><rect x="1317.20" y="834" width="2.4" height="20" rx="1.2" fill="#ca97e8"/><rect x="1402.60" y="808.5" width="2.4" height="23" rx="1.2" fill="#ca97e8"/><rect x="1402.60" y="834" width="2.4" height="20" rx="1.2" fill="#ca97e8"/><rect x="1443.50" y="808.5" width="3" height="23" rx="1.5" fill="#ca97e8"/><rect x="1443.50" y="834" width="3" height="20" rx="1.5" fill="#ca97e8"/><rect x="1485.50" y="808.5" width="3" height="23" rx="1.5" fill="#ca97e8"/><rect x="1485.50" y="834" width="3" height="20" rx="1.5" fill="#ca97e8"/><rect x="1528.50" y="808.5" width="3" height="23" rx="1.5" fill="#ca97e8"/><rect x="1528.50" y="834" width="3" height="20" rx="1.5" fill="#ca97e8"/><rect x="1570.00" y="808.5" width="3" height="23" rx="1.5" fill="#ca97e8"/><rect x="1570.00" y="834" width="3" height="20" rx="1.5" fill="#ca97e8"/><rect x="1611.60" y="808.5" width="2.4" height="23" rx="1.2" fill="#ca97e8"/><rect x="1611.60" y="834" width="2.4" height="20" rx="1.2" fill="#ca97e8"/><rect x="1653.60" y="808.5" width="2.4" height="23" rx="1.2" fill="#ca97e8"/><rect x="1653.60" y="834" width="2.4" height="20" rx="1.2" fill="#ca97e8"/><rect x="1698.00" y="808.5" width="3" height="23" rx="1.5" fill="#ca97e8"/><rect x="1698.00" y="834" width="3" height="20" rx="1.5" fill="#ca97e8"/><rect x="1740.00" y="808.5" width="3" height="23" rx="1.5" fill="#ca97e8"/><rect x="1740.00" y="834" width="3" height="20" rx="1.5" fill="#ca97e8"/><rect x="1866.30" y="808.5" width="3" height="23" rx="1.5" fill="#ca97e8"/><rect x="1866.30" y="834" width="3" height="20" rx="1.5" fill="#ca97e8"/><rect x="1907.90" y="808.5" width="3" height="23" rx="1.5" fill="#ca97e8"/><rect x="1907.90" y="834" width="3" height="20" rx="1.5" fill="#ca97e8"/><rect x="1955.50" y="808.5" width="5" height="23" rx="2.5" fill="#ca97e8"/><rect x="1955.50" y="834" width="5" height="20" rx="2.5" fill="#ca97e8"/><rect x="1997.05" y="808.5" width="3.5" height="23" rx="1.75" fill="#ca97e8"/><rect x="1997.05" y="834" width="3.5" height="20" rx="1.75" fill="#ca97e8"/><rect x="2040.30" y="808.5" width="5" height="23" rx="2.5" fill="#ca97e8"/><rect x="2040.30" y="834" width="5" height="20" rx="2.5" fill="#ca97e8"/><rect x="2083.15" y="808.5" width="3.5" height="23" rx="1.75" fill="#ca97e8"/><rect x="2083.15" y="834" width="3.5" height="20" rx="1.75" fill="#ca97e8"/><rect x="2126.40" y="808.5" width="5" height="23" rx="2.5" fill="#ca97e8"/><rect x="2126.40" y="834" width="5" height="20" rx="2.5" fill="#ca97e8"/><rect x="2208.85" y="808.5" width="3.5" height="23" rx="1.75" fill="#ca97e8"/><rect x="2208.85" y="834" width="3.5" height="20" rx="1.75" fill="#ca97e8"/><rect x="2247.05" y="808.5" width="3.5" height="23" rx="1.75" fill="#ca97e8"/><rect x="2247.05" y="834" width="3.5" height="20" rx="1.75" fill="#ca97e8"/><rect x="2292.70" y="808.5" width="5" height="23" rx="2.5" fill="#ca97e8"/><rect x="2292.70" y="834" width="5" height="20" rx="2.5" fill="#ca97e8"/><rect x="2336.25" y="808.5" width="3.5" height="23" rx="1.75" fill="#ca97e8"/><rect x="2336.25" y="834" width="3.5" height="20" rx="1.75" fill="#ca97e8"/><rect x="2377.05" y="808.5" width="3.5" height="23" rx="1.75" fill="#ca97e8"/><rect x="2377.05" y="834" width="3.5" height="20" rx="1.75" fill="#ca97e8"/><rect x="2417.25" y="808.5" width="3.5" height="23" rx="1.75" fill="#ca97e8"/><rect x="2417.25" y="834" width="3.5" height="20" rx="1.75" fill="#ca97e8"/><rect x="782.80" y="808.5" width="2" height="23" rx="1.0" fill="#77d786"/><rect x="782.80" y="834" width="2" height="20" rx="1.0" fill="#77d786"/><rect x="823.90" y="808.5" width="2" height="23" rx="1.0" fill="#77d786"/><rect x="823.90" y="834" width="2" height="20" rx="1.0" fill="#77d786"/><rect x="896.60" y="808.5" width="3.8" height="23" rx="1.9" fill="#77d786"/><rect x="896.60" y="834" width="3.8" height="20" rx="1.9" fill="#77d786"/><rect x="905.00" y="808.5" width="3" height="23" rx="1.5" fill="#77d786"/><rect x="905.00" y="834" width="3" height="20" rx="1.5" fill="#77d786"/><rect x="951.40" y="808.5" width="4" height="23" rx="2.0" fill="#77d786"/><rect x="951.40" y="834" width="4" height="20" rx="2.0" fill="#77d786"/><rect x="990.30" y="808.5" width="2" height="23" rx="1.0" fill="#77d786"/><rect x="990.30" y="834" width="2" height="20" rx="1.0" fill="#77d786"/><rect x="994.30" y="808.5" width="2" height="23" rx="1.0" fill="#77d786"/><rect x="994.30" y="834" width="2" height="20" rx="1.0" fill="#77d786"/><rect x="1036.40" y="808.5" width="2" height="23" rx="1.0" fill="#77d786"/><rect x="1036.40" y="834" width="2" height="20" rx="1.0" fill="#77d786"/><rect x="1040.20" y="808.5" width="2" height="23" rx="1.0" fill="#77d786"/><rect x="1040.20" y="834" width="2" height="20" rx="1.0" fill="#77d786"/><rect x="1081.90" y="808.5" width="5" height="23" rx="2.5" fill="#77d786"/><rect x="1081.90" y="834" width="5" height="20" rx="2.5" fill="#77d786"/><rect x="1120.90" y="808.5" width="2" height="23" rx="1.0" fill="#77d786"/><rect x="1120.90" y="834" width="2" height="20" rx="1.0" fill="#77d786"/><rect x="1127.50" y="808.5" width="3" height="23" rx="1.5" fill="#77d786"/><rect x="1127.50" y="834" width="3" height="20" rx="1.5" fill="#77d786"/><rect x="1162.85" y="808.5" width="1.7" height="23" rx="0.85" fill="#77d786"/><rect x="1162.85" y="834" width="1.7" height="20" rx="0.85" fill="#77d786"/><rect x="1170.95" y="808.5" width="3.5" height="23" rx="1.75" fill="#77d786"/><rect x="1170.95" y="834" width="3.5" height="20" rx="1.75" fill="#77d786"/><rect x="1207.15" y="808.5" width="1.7" height="23" rx="0.85" fill="#77d786"/><rect x="1207.15" y="834" width="1.7" height="20" rx="0.85" fill="#77d786"/><rect x="1244.60" y="808.5" width="2" height="23" rx="1.0" fill="#77d786"/><rect x="1244.60" y="834" width="2" height="20" rx="1.0" fill="#77d786"/><rect x="1257.40" y="808.5" width="3" height="23" rx="1.5" fill="#77d786"/><rect x="1257.40" y="834" width="3" height="20" rx="1.5" fill="#77d786"/><rect x="1289.15" y="808.5" width="1.7" height="23" rx="0.85" fill="#77d786"/><rect x="1289.15" y="834" width="1.7" height="20" rx="0.85" fill="#77d786"/><rect x="1355.10" y="808.5" width="3" height="23" rx="1.5" fill="#77d786"/><rect x="1355.10" y="834" width="3" height="20" rx="1.5" fill="#77d786"/><rect x="1370.50" y="808.5" width="3" height="23" rx="1.5" fill="#77d786"/><rect x="1370.50" y="834" width="3" height="20" rx="1.5" fill="#77d786"/><rect x="1415.80" y="808.5" width="2" height="23" rx="1.0" fill="#77d786"/><rect x="1415.80" y="834" width="2" height="20" rx="1.0" fill="#77d786"/><rect x="1419.40" y="808.5" width="2" height="23" rx="1.0" fill="#77d786"/><rect x="1419.40" y="834" width="2" height="20" rx="1.0" fill="#77d786"/><rect x="1454.80" y="808.5" width="2" height="23" rx="1.0" fill="#77d786"/><rect x="1454.80" y="834" width="2" height="20" rx="1.0" fill="#77d786"/><rect x="1457.60" y="808.5" width="2" height="23" rx="1.0" fill="#77d786"/><rect x="1457.60" y="834" width="2" height="20" rx="1.0" fill="#77d786"/><rect x="1502.70" y="808.5" width="2" height="23" rx="1.0" fill="#77d786"/><rect x="1502.70" y="834" width="2" height="20" rx="1.0" fill="#77d786"/><rect x="1505.50" y="808.5" width="2" height="23" rx="1.0" fill="#77d786"/><rect x="1505.50" y="834" width="2" height="20" rx="1.0" fill="#77d786"/><rect x="1543.95" y="808.5" width="1.7" height="23" rx="0.85" fill="#77d786"/><rect x="1543.95" y="834" width="1.7" height="20" rx="0.85" fill="#77d786"/><rect x="1552.50" y="808.5" width="5" height="23" rx="2.5" fill="#77d786"/><rect x="1552.50" y="834" width="5" height="20" rx="2.5" fill="#77d786"/><rect x="1584.15" y="808.5" width="1.7" height="23" rx="0.85" fill="#77d786"/><rect x="1584.15" y="834" width="1.7" height="20" rx="0.85" fill="#77d786"/><rect x="1600.10" y="808.5" width="5" height="23" rx="2.5" fill="#77d786"/><rect x="1600.10" y="834" width="5" height="20" rx="2.5" fill="#77d786"/><rect x="1624.15" y="808.5" width="1.7" height="23" rx="0.85" fill="#77d786"/><rect x="1624.15" y="834" width="1.7" height="20" rx="0.85" fill="#77d786"/><rect x="1640.30" y="808.5" width="3" height="23" rx="1.5" fill="#77d786"/><rect x="1640.30" y="834" width="3" height="20" rx="1.5" fill="#77d786"/><rect x="1669.15" y="808.5" width="1.7" height="23" rx="0.85" fill="#77d786"/><rect x="1669.15" y="834" width="1.7" height="20" rx="0.85" fill="#77d786"/><rect x="1685.20" y="808.5" width="3" height="23" rx="1.5" fill="#77d786"/><rect x="1685.20" y="834" width="3" height="20" rx="1.5" fill="#77d786"/><rect x="1709.95" y="808.5" width="1.7" height="23" rx="0.85" fill="#77d786"/><rect x="1709.95" y="834" width="1.7" height="20" rx="0.85" fill="#77d786"/><rect x="1724.60" y="808.5" width="3" height="23" rx="1.5" fill="#77d786"/><rect x="1724.60" y="834" width="3" height="20" rx="1.5" fill="#77d786"/><rect x="1755.95" y="808.5" width="1.7" height="23" rx="0.85" fill="#77d786"/><rect x="1755.95" y="834" width="1.7" height="20" rx="0.85" fill="#77d786"/><rect x="1776.30" y="808.5" width="5" height="23" rx="2.5" fill="#77d786"/><rect x="1776.30" y="834" width="5" height="20" rx="2.5" fill="#77d786"/><rect x="1794.95" y="808.5" width="1.7" height="23" rx="0.85" fill="#77d786"/><rect x="1794.95" y="834" width="1.7" height="20" rx="0.85" fill="#77d786"/><rect x="1821.20" y="808.5" width="5" height="23" rx="2.5" fill="#77d786"/><rect x="1821.20" y="834" width="5" height="20" rx="2.5" fill="#77d786"/><rect x="1833.95" y="808.5" width="1.7" height="23" rx="0.85" fill="#77d786"/><rect x="1833.95" y="834" width="1.7" height="20" rx="0.85" fill="#77d786"/><rect x="1876.90" y="808.5" width="5" height="23" rx="2.5" fill="#77d786"/><rect x="1876.90" y="834" width="5" height="20" rx="2.5" fill="#77d786"/><rect x="1895.25" y="808.5" width="3.5" height="23" rx="1.75" fill="#77d786"/><rect x="1895.25" y="834" width="3.5" height="20" rx="1.75" fill="#77d786"/><rect x="1923.05" y="808.5" width="1.7" height="23" rx="0.85" fill="#77d786"/><rect x="1923.05" y="834" width="1.7" height="20" rx="0.85" fill="#77d786"/><rect x="1932.20" y="808.5" width="5" height="23" rx="2.5" fill="#77d786"/><rect x="1932.20" y="834" width="5" height="20" rx="2.5" fill="#77d786"/><rect x="1963.15" y="808.5" width="1.7" height="23" rx="0.85" fill="#77d786"/><rect x="1963.15" y="834" width="1.7" height="20" rx="0.85" fill="#77d786"/><rect x="1971.25" y="808.5" width="3.5" height="23" rx="1.75" fill="#77d786"/><rect x="1971.25" y="834" width="3.5" height="20" rx="1.75" fill="#77d786"/><rect x="2004.60" y="808.5" width="2" height="23" rx="1.0" fill="#77d786"/><rect x="2004.60" y="834" width="2" height="20" rx="1.0" fill="#77d786"/><rect x="2008.20" y="808.5" width="2" height="23" rx="1.0" fill="#77d786"/><rect x="2008.20" y="834" width="2" height="20" rx="1.0" fill="#77d786"/><rect x="2053.15" y="808.5" width="1.7" height="23" rx="0.85" fill="#77d786"/><rect x="2053.15" y="834" width="1.7" height="20" rx="0.85" fill="#77d786"/><rect x="2063.90" y="808.5" width="5" height="23" rx="2.5" fill="#77d786"/><rect x="2063.90" y="834" width="5" height="20" rx="2.5" fill="#77d786"/><rect x="2090.10" y="808.5" width="3" height="23" rx="1.5" fill="#77d786"/><rect x="2090.10" y="834" width="3" height="20" rx="1.5" fill="#77d786"/><rect x="2133.75" y="808.5" width="1.7" height="23" rx="0.85" fill="#77d786"/><rect x="2133.75" y="834" width="1.7" height="20" rx="0.85" fill="#77d786"/><rect x="2144.40" y="808.5" width="5" height="23" rx="2.5" fill="#77d786"/><rect x="2144.40" y="834" width="5" height="20" rx="2.5" fill="#77d786"/><rect x="2164.50" y="808.5" width="3" height="23" rx="1.5" fill="#77d786"/><rect x="2164.50" y="834" width="3" height="20" rx="1.5" fill="#77d786"/><rect x="2219.85" y="808.5" width="1.7" height="23" rx="0.85" fill="#77d786"/><rect x="2219.85" y="834" width="1.7" height="20" rx="0.85" fill="#77d786"/><rect x="2235.50" y="808.5" width="5" height="23" rx="2.5" fill="#77d786"/><rect x="2235.50" y="834" width="5" height="20" rx="2.5" fill="#77d786"/><rect x="2261.85" y="808.5" width="1.7" height="23" rx="0.85" fill="#77d786"/><rect x="2261.85" y="834" width="1.7" height="20" rx="0.85" fill="#77d786"/><rect x="2275.40" y="808.5" width="5" height="23" rx="2.5" fill="#77d786"/><rect x="2275.40" y="834" width="5" height="20" rx="2.5" fill="#77d786"/><rect x="2310.50" y="808.5" width="2" height="23" rx="1.0" fill="#77d786"/><rect x="2310.50" y="834" width="2" height="20" rx="1.0" fill="#77d786"/><rect x="2343.70" y="808.5" width="3" height="23" rx="1.5" fill="#77d786"/><rect x="2343.70" y="834" width="3" height="20" rx="1.5" fill="#77d786"/><rect x="2385.65" y="808.5" width="1.7" height="23" rx="0.85" fill="#77d786"/><rect x="2385.65" y="834" width="1.7" height="20" rx="0.85" fill="#77d786"/><rect x="2398.40" y="808.5" width="5" height="23" rx="2.5" fill="#77d786"/><rect x="2398.40" y="834" width="5" height="20" rx="2.5" fill="#77d786"/><rect x="2422.15" y="808.5" width="1.7" height="23" rx="0.85" fill="#77d786"/><rect x="2422.15" y="834" width="1.7" height="20" rx="0.85" fill="#77d786"/><rect x="2429.50" y="808.5" width="3" height="23" rx="1.5" fill="#77d786"/><rect x="2429.50" y="834" width="3" height="20" rx="1.5" fill="#77d786"/><rect x="786" y="808.5" width="2.5" height="45" fill="#b5b5b5"/><rect x="828.8" y="282" width="2.5" height="567" fill="#0b5ee0"/><path d="M823 280 H837 L830 289 Z" fill="#0b5ee0"/></g></svg>
<div style="position:absolute;left:770.9px;top:257.27px;font-size:22.01px;line-height:22.01px;color:#737373;font-weight:400;white-space:pre;letter-spacing:1.607px;">00:00.000</div>
<div style="position:absolute;left:1276.3px;top:257.27px;font-size:22.01px;line-height:22.01px;color:#737373;font-weight:400;white-space:pre;letter-spacing:1.607px;">00:00.100</div>
<div style="position:absolute;left:1781px;top:257.27px;font-size:22.01px;line-height:22.01px;color:#737373;font-weight:400;white-space:pre;letter-spacing:1.607px;">00:00.200</div>
<div style="position:absolute;left:2286px;top:257.27px;font-size:22.01px;line-height:22.01px;color:#737373;font-weight:400;white-space:pre;letter-spacing:1.607px;">00:00.300</div>
<div style="position:absolute;left:112px;top:849px;width:2336px;height:2px;background:#d9d9d9;"></div>
<div style="position:absolute;left:112px;top:851px;width:2336px;height:55.5px;background:#f2f2f2;"></div>
<div style="position:absolute;left:112px;top:906.5px;width:2336px;height:1.7999999999999545px;background:#dadada;"></div>
<div style="position:absolute;left:125px;top:868.97px;font-size:22.01px;line-height:22.01px;color:#222;font-weight:400;white-space:pre;letter-spacing:0.601px;">GPU Activity</div>
<svg style="position:absolute;left:0;top:0" width="2560" height="910">
<path d="M267 876.5 L271.2 872 L275.4 876.5 M267 882.5 L271.2 887 L275.4 882.5" fill="none" stroke="#333" stroke-width="1.9"/>
<rect x="286" y="859.5" width="1.5" height="44" fill="#d5d5d5"/>
<rect x="2414.3" y="869" width="21.7" height="21.5" rx="4.5" fill="none" stroke="#6a6a6a" stroke-width="2"/>
<rect x="2427.6" y="871.4" width="5.1" height="15.3" rx="1" fill="#7a7a7a"/>
</svg>
<div style="position:absolute;left:112px;top:908.3px;width:2336px;height:52.700000000000045px;background:#fff;"></div>
<div style="position:absolute;left:112px;top:961px;width:2336px;height:1.6000000000000227px;background:#e3e3e3;"></div>
<div style="position:absolute;left:460.05px;top:919.7px;width:1.5px;height:30.59999999999991px;background:#dedede;"></div>
<div style="position:absolute;left:693.75px;top:919.7px;width:1.5px;height:30.59999999999991px;background:#dedede;"></div>
<div style="position:absolute;left:868.45px;top:919.7px;width:1.5px;height:30.59999999999991px;background:#dedede;"></div>
<div style="position:absolute;left:1022.25px;top:919.7px;width:1.5px;height:30.59999999999991px;background:#dedede;"></div>
<div style="position:absolute;left:1280.15px;top:919.7px;width:1.5px;height:30.59999999999991px;background:#dedede;"></div>
<div style="position:absolute;left:1474.25px;top:919.7px;width:1.5px;height:30.59999999999991px;background:#dedede;"></div>
<div style="position:absolute;left:148.5px;top:925.15px;font-size:21.8px;line-height:21.8px;color:#262626;font-weight:400;white-space:pre;letter-spacing:0.485px;">Channel Name</div>
<div style="position:absolute;left:553px;top:925.15px;font-size:21.8px;line-height:21.8px;color:#262626;font-weight:700;white-space:pre;letter-spacing:0.464px;">Creation</div>
<svg style="position:absolute;left:0;top:0" width="700" height="960"><path d="M666.3 940.3 L673.2 933 L680.1 940.3" fill="none" stroke="#555" stroke-width="1.9"/></svg>
<div style="position:absolute;left:758.8px;top:925.15px;font-size:21.8px;line-height:21.8px;color:#262626;font-weight:400;white-space:pre;letter-spacing:0.756px;">Duration</div>
<div style="position:absolute;left:890.5px;top:925.15px;font-size:21.8px;line-height:21.8px;color:#262626;font-weight:400;white-space:pre;letter-spacing:0.467px;">State</div>
<div style="position:absolute;left:1050.6px;top:925.15px;font-size:21.8px;line-height:21.8px;color:#262626;font-weight:400;white-space:pre;letter-spacing:0.309px;">CPU to GPU Laten...</div>
<div style="position:absolute;left:1303px;top:925.15px;font-size:21.8px;line-height:21.8px;color:#262626;font-weight:400;white-space:pre;letter-spacing:0.578px;">Frame</div>
<div style="position:absolute;left:1496.5px;top:925.15px;font-size:21.8px;line-height:21.8px;color:#262626;font-weight:400;white-space:pre;letter-spacing:0.489px;">Label</div>
<div style="position:absolute;left:112px;top:962.6px;width:2336px;height:512px;overflow:hidden;">
<div style="position:absolute;left:0;top:10.399999999999977px;width:2336px;height:36px;background:#0064e1;"></div>
<div style="position:absolute;left:40.70px;top:18.25px;font-size:21.8px;line-height:21.8px;color:#fff;white-space:pre;letter-spacing:0.811px;">Compute</div>
<div style="position:absolute;right:1777.45px;top:18.25px;font-size:21.8px;line-height:21.8px;color:#fff;white-space:pre;text-align:right;letter-spacing:1.551px;">00:00.013.315</div>
<div style="position:absolute;right:1603.86px;top:18.25px;font-size:21.8px;line-height:21.8px;color:#fff;white-space:pre;text-align:right;letter-spacing:1.340px;">904.46 µs</div>
<div style="position:absolute;left:782.50px;top:18.25px;font-size:21.8px;line-height:21.8px;color:#fff;white-space:pre;letter-spacing:0.654px;">Active</div>
<div style="position:absolute;right:1191.86px;top:18.25px;font-size:21.8px;line-height:21.8px;color:#fff;white-space:pre;text-align:right;letter-spacing:1.340px;">373.38 µs</div>
<div style="position:absolute;left:1194.90px;top:18.25px;font-size:21.8px;line-height:21.8px;color:#fff;white-space:pre;letter-spacing:1.117px;">Frame 3</div>
<div style="position:absolute;left:1388.50px;top:18.25px;font-size:21.8px;line-height:21.8px;color:#fff;white-space:pre;letter-spacing:0.825px;">Command Buffer 0:Dawn_ComputePassEncoder_storing particle data</div>
<div style="position:absolute;left:2137.20px;top:18.25px;font-size:21.8px;line-height:21.8px;color:#fff;white-space:pre;letter-spacing:0.833px;">(Google Chrome Helper (GPU))</div>
<div style="position:absolute;left:40.70px;top:54.25px;font-size:21.8px;line-height:21.8px;color:#0e0e0e;white-space:pre;letter-spacing:0.680px;">Vertex</div>
<div style="position:absolute;right:1777.45px;top:54.25px;font-size:21.8px;line-height:21.8px;color:#0e0e0e;white-space:pre;text-align:right;letter-spacing:1.551px;">00:00.014.253</div>
<div style="position:absolute;right:1603.86px;top:54.25px;font-size:21.8px;line-height:21.8px;color:#0e0e0e;white-space:pre;text-align:right;letter-spacing:1.339px;">74.58 µs</div>
<div style="position:absolute;left:782.50px;top:54.25px;font-size:21.8px;line-height:21.8px;color:#0e0e0e;white-space:pre;letter-spacing:0.654px;">Active</div>
<div style="position:absolute;right:1191.76px;top:54.25px;font-size:21.8px;line-height:21.8px;color:#0e0e0e;white-space:pre;text-align:right;letter-spacing:1.441px;">1.31 ms</div>
<div style="position:absolute;left:1194.90px;top:54.25px;font-size:21.8px;line-height:21.8px;color:#0e0e0e;white-space:pre;letter-spacing:1.117px;">Frame 3</div>
<div style="position:absolute;left:1388.50px;top:54.25px;font-size:21.8px;line-height:21.8px;color:#0e0e0e;white-space:pre;letter-spacing:0.784px;">Command Buffer 0:Dawn_RenderPassEncoder_drawing instanced particles</div>
<div style="position:absolute;left:2194.50px;top:54.25px;font-size:21.8px;line-height:21.8px;color:#0e0e0e;white-space:pre;letter-spacing:0.833px;">(Google Chrome Helper (GPU))</div>
<div style="position:absolute;left:40.70px;top:90.25px;font-size:21.8px;line-height:21.8px;color:#0e0e0e;white-space:pre;letter-spacing:0.734px;">Fragment</div>
<div style="position:absolute;right:1777.45px;top:90.25px;font-size:21.8px;line-height:21.8px;color:#0e0e0e;white-space:pre;text-align:right;letter-spacing:1.551px;">00:00.014.355</div>
<div style="position:absolute;right:1603.86px;top:90.25px;font-size:21.8px;line-height:21.8px;color:#0e0e0e;white-space:pre;text-align:right;letter-spacing:1.339px;">65.29 µs</div>
<div style="position:absolute;left:782.50px;top:90.25px;font-size:21.8px;line-height:21.8px;color:#0e0e0e;white-space:pre;letter-spacing:0.654px;">Active</div>
<div style="position:absolute;right:1191.76px;top:90.25px;font-size:21.8px;line-height:21.8px;color:#0e0e0e;white-space:pre;text-align:right;letter-spacing:1.441px;">1.41 ms</div>
<div style="position:absolute;left:1194.90px;top:90.25px;font-size:21.8px;line-height:21.8px;color:#0e0e0e;white-space:pre;letter-spacing:1.117px;">Frame 3</div>
<div style="position:absolute;left:1388.50px;top:90.25px;font-size:21.8px;line-height:21.8px;color:#0e0e0e;white-space:pre;letter-spacing:0.784px;">Command Buffer 0:Dawn_RenderPassEncoder_drawing instanced particles</div>
<div style="position:absolute;left:2194.50px;top:90.25px;font-size:21.8px;line-height:21.8px;color:#0e0e0e;white-space:pre;letter-spacing:0.833px;">(Google Chrome Helper (GPU))</div>
<div style="position:absolute;left:40.70px;top:126.25px;font-size:21.8px;line-height:21.8px;color:#0e0e0e;white-space:pre;letter-spacing:0.811px;">Compute</div>
<div style="position:absolute;right:1777.45px;top:126.25px;font-size:21.8px;line-height:21.8px;color:#0e0e0e;white-space:pre;text-align:right;letter-spacing:1.551px;">00:00.027.260</div>
<div style="position:absolute;right:1603.86px;top:126.25px;font-size:21.8px;line-height:21.8px;color:#0e0e0e;white-space:pre;text-align:right;letter-spacing:1.340px;">904.33 µs</div>
<div style="position:absolute;left:782.50px;top:126.25px;font-size:21.8px;line-height:21.8px;color:#0e0e0e;white-space:pre;letter-spacing:0.654px;">Active</div>
<div style="position:absolute;right:1191.86px;top:126.25px;font-size:21.8px;line-height:21.8px;color:#0e0e0e;white-space:pre;text-align:right;letter-spacing:1.340px;">175.08 µs</div>
<div style="position:absolute;left:1194.90px;top:126.25px;font-size:21.8px;line-height:21.8px;color:#0e0e0e;white-space:pre;letter-spacing:1.117px;">Frame 5</div>
<div style="position:absolute;left:1388.50px;top:126.25px;font-size:21.8px;line-height:21.8px;color:#0e0e0e;white-space:pre;letter-spacing:0.825px;">Command Buffer 0:Dawn_ComputePassEncoder_storing particle data</div>
<div style="position:absolute;left:2137.20px;top:126.25px;font-size:21.8px;line-height:21.8px;color:#0e0e0e;white-space:pre;letter-spacing:0.833px;">(Google Chrome Helper (GPU))</div>
<div style="position:absolute;left:40.70px;top:162.25px;font-size:21.8px;line-height:21.8px;color:#0e0e0e;white-space:pre;letter-spacing:0.680px;">Vertex</div>
<div style="position:absolute;right:1777.45px;top:162.25px;font-size:21.8px;line-height:21.8px;color:#0e0e0e;white-space:pre;text-align:right;letter-spacing:1.551px;">00:00.028.195</div>
<div style="position:absolute;right:1603.86px;top:162.25px;font-size:21.8px;line-height:21.8px;color:#0e0e0e;white-space:pre;text-align:right;letter-spacing:1.339px;">74.21 µs</div>
<div style="position:absolute;left:782.50px;top:162.25px;font-size:21.8px;line-height:21.8px;color:#0e0e0e;white-space:pre;letter-spacing:0.654px;">Active</div>
<div style="position:absolute;right:1191.79px;top:162.25px;font-size:21.8px;line-height:21.8px;color:#0e0e0e;white-space:pre;text-align:right;letter-spacing:1.410px;">1.11 ms</div>
<div style="position:absolute;left:1194.90px;top:162.25px;font-size:21.8px;line-height:21.8px;color:#0e0e0e;white-space:pre;letter-spacing:1.117px;">Frame 5</div>
<div style="position:absolute;left:1388.50px;top:162.25px;font-size:21.8px;line-height:21.8px;color:#0e0e0e;white-space:pre;letter-spacing:0.784px;">Command Buffer 0:Dawn_RenderPassEncoder_drawing instanced particles</div>
<div style="position:absolute;left:2194.50px;top:162.25px;font-size:21.8px;line-height:21.8px;color:#0e0e0e;white-space:pre;letter-spacing:0.833px;">(Google Chrome Helper (GPU))</div>
<div style="position:absolute;left:40.70px;top:198.25px;font-size:21.8px;line-height:21.8px;color:#0e0e0e;white-space:pre;letter-spacing:0.734px;">Fragment</div>
<div style="position:absolute;right:1777.45px;top:198.25px;font-size:21.8px;line-height:21.8px;color:#0e0e0e;white-space:pre;text-align:right;letter-spacing:1.551px;">00:00.028.296</div>
<div style="position:absolute;right:1603.86px;top:198.25px;font-size:21.8px;line-height:21.8px;color:#0e0e0e;white-space:pre;text-align:right;letter-spacing:1.339px;">65.75 µs</div>
<div style="position:absolute;left:782.50px;top:198.25px;font-size:21.8px;line-height:21.8px;color:#0e0e0e;white-space:pre;letter-spacing:0.654px;">Active</div>
<div style="position:absolute;right:1191.76px;top:198.25px;font-size:21.8px;line-height:21.8px;color:#0e0e0e;white-space:pre;text-align:right;letter-spacing:1.441px;">1.21 ms</div>
<div style="position:absolute;left:1194.90px;top:198.25px;font-size:21.8px;line-height:21.8px;color:#0e0e0e;white-space:pre;letter-spacing:1.117px;">Frame 5</div>
<div style="position:absolute;left:1388.50px;top:198.25px;font-size:21.8px;line-height:21.8px;color:#0e0e0e;white-space:pre;letter-spacing:0.784px;">Command Buffer 0:Dawn_RenderPassEncoder_drawing instanced particles</div>
<div style="position:absolute;left:2194.50px;top:198.25px;font-size:21.8px;line-height:21.8px;color:#0e0e0e;white-space:pre;letter-spacing:0.833px;">(Google Chrome Helper (GPU))</div>
<div style="position:absolute;left:40.70px;top:234.25px;font-size:21.8px;line-height:21.8px;color:#0e0e0e;white-space:pre;letter-spacing:0.811px;">Compute</div>
<div style="position:absolute;right:1777.45px;top:234.25px;font-size:21.8px;line-height:21.8px;color:#0e0e0e;white-space:pre;text-align:right;letter-spacing:1.551px;">00:00.028.756</div>
<div style="position:absolute;right:1603.86px;top:234.25px;font-size:21.8px;line-height:21.8px;color:#0e0e0e;white-space:pre;text-align:right;letter-spacing:1.340px;">900.50 µs</div>
<div style="position:absolute;left:782.50px;top:234.25px;font-size:21.8px;line-height:21.8px;color:#0e0e0e;white-space:pre;letter-spacing:0.654px;">Active</div>
<div style="position:absolute;right:1191.86px;top:234.25px;font-size:21.8px;line-height:21.8px;color:#0e0e0e;white-space:pre;text-align:right;letter-spacing:1.339px;">86.17 µs</div>
<div style="position:absolute;left:1194.90px;top:234.25px;font-size:21.8px;line-height:21.8px;color:#0e0e0e;white-space:pre;letter-spacing:1.117px;">Frame 7</div>
<div style="position:absolute;left:1388.50px;top:234.25px;font-size:21.8px;line-height:21.8px;color:#0e0e0e;white-space:pre;letter-spacing:0.825px;">Command Buffer 0:Dawn_ComputePassEncoder_storing particle data</div>
<div style="position:absolute;left:2137.20px;top:234.25px;font-size:21.8px;line-height:21.8px;color:#0e0e0e;white-space:pre;letter-spacing:0.833px;">(Google Chrome Helper (GPU))</div>
<div style="position:absolute;left:40.70px;top:270.25px;font-size:21.8px;line-height:21.8px;color:#0e0e0e;white-space:pre;letter-spacing:0.680px;">Vertex</div>
<div style="position:absolute;right:1777.45px;top:270.25px;font-size:21.8px;line-height:21.8px;color:#0e0e0e;white-space:pre;text-align:right;letter-spacing:1.551px;">00:00.029.696</div>
<div style="position:absolute;right:1603.86px;top:270.25px;font-size:21.8px;line-height:21.8px;color:#0e0e0e;white-space:pre;text-align:right;letter-spacing:1.339px;">75.79 µs</div>
<div style="position:absolute;left:782.50px;top:270.25px;font-size:21.8px;line-height:21.8px;color:#0e0e0e;white-space:pre;letter-spacing:0.654px;">Active</div>
<div style="position:absolute;right:1191.76px;top:270.25px;font-size:21.8px;line-height:21.8px;color:#0e0e0e;white-space:pre;text-align:right;letter-spacing:1.441px;">1.03 ms</div>
<div style="position:absolute;left:1194.90px;top:270.25px;font-size:21.8px;line-height:21.8px;color:#0e0e0e;white-space:pre;letter-spacing:1.117px;">Frame 7</div>
<div style="position:absolute;left:1388.50px;top:270.25px;font-size:21.8px;line-height:21.8px;color:#0e0e0e;white-space:pre;letter-spacing:0.784px;">Command Buffer 0:Dawn_RenderPassEncoder_drawing instanced particles</div>
<div style="position:absolute;left:2194.50px;top:270.25px;font-size:21.8px;line-height:21.8px;color:#0e0e0e;white-space:pre;letter-spacing:0.833px;">(Google Chrome Helper (GPU))</div>
<div style="position:absolute;left:40.70px;top:306.25px;font-size:21.8px;line-height:21.8px;color:#0e0e0e;white-space:pre;letter-spacing:0.734px;">Fragment</div>
<div style="position:absolute;right:1777.45px;top:306.25px;font-size:21.8px;line-height:21.8px;color:#0e0e0e;white-space:pre;text-align:right;letter-spacing:1.551px;">00:00.029.805</div>
<div style="position:absolute;right:1603.86px;top:306.25px;font-size:21.8px;line-height:21.8px;color:#0e0e0e;white-space:pre;text-align:right;letter-spacing:1.339px;">65.83 µs</div>
<div style="position:absolute;left:782.50px;top:306.25px;font-size:21.8px;line-height:21.8px;color:#0e0e0e;white-space:pre;letter-spacing:0.654px;">Active</div>
<div style="position:absolute;right:1191.76px;top:306.25px;font-size:21.8px;line-height:21.8px;color:#0e0e0e;white-space:pre;text-align:right;letter-spacing:1.441px;">1.14 ms</div>
<div style="position:absolute;left:1194.90px;top:306.25px;font-size:21.8px;line-height:21.8px;color:#0e0e0e;white-space:pre;letter-spacing:1.117px;">Frame 7</div>
<div style="position:absolute;left:1388.50px;top:306.25px;font-size:21.8px;line-height:21.8px;color:#0e0e0e;white-space:pre;letter-spacing:0.784px;">Command Buffer 0:Dawn_RenderPassEncoder_drawing instanced particles</div>
<div style="position:absolute;left:2194.50px;top:306.25px;font-size:21.8px;line-height:21.8px;color:#0e0e0e;white-space:pre;letter-spacing:0.833px;">(Google Chrome Helper (GPU))</div>
<div style="position:absolute;left:394.6px;top:336.9px;width:167px;height:31.3px;border-radius:6px;background:#b6d6fb;"></div>
<div style="position:absolute;left:40.70px;top:342.25px;font-size:21.8px;line-height:21.8px;color:#0e0e0e;white-space:pre;letter-spacing:0.811px;">Compute</div>
<div style="position:absolute;right:1777.45px;top:342.25px;font-size:21.8px;line-height:21.8px;color:#0e0e0e;white-space:pre;text-align:right;letter-spacing:1.551px;">00:00.038.306</div>
<div style="position:absolute;right:1603.86px;top:342.25px;font-size:21.8px;line-height:21.8px;color:#0e0e0e;white-space:pre;text-align:right;letter-spacing:1.340px;">903.21 µs</div>
<div style="position:absolute;left:782.50px;top:342.25px;font-size:21.8px;line-height:21.8px;color:#0e0e0e;white-space:pre;letter-spacing:0.654px;">Active</div>
<div style="position:absolute;right:1191.86px;top:342.25px;font-size:21.8px;line-height:21.8px;color:#0e0e0e;white-space:pre;text-align:right;letter-spacing:1.340px;">343.46 µs</div>
<div style="position:absolute;left:1194.90px;top:342.25px;font-size:21.8px;line-height:21.8px;color:#0e0e0e;white-space:pre;letter-spacing:1.117px;">Frame 9</div>
<div style="position:absolute;left:1388.50px;top:342.25px;font-size:21.8px;line-height:21.8px;color:#0e0e0e;white-space:pre;letter-spacing:0.825px;">Command Buffer 0:Dawn_ComputePassEncoder_storing particle data</div>
<div style="position:absolute;left:2137.20px;top:342.25px;font-size:21.8px;line-height:21.8px;color:#0e0e0e;white-space:pre;letter-spacing:0.833px;">(Google Chrome Helper (GPU))</div>
<div style="position:absolute;left:40.70px;top:378.25px;font-size:21.8px;line-height:21.8px;color:#0e0e0e;white-space:pre;letter-spacing:0.680px;">Vertex</div>
<div style="position:absolute;right:1777.45px;top:378.25px;font-size:21.8px;line-height:21.8px;color:#0e0e0e;white-space:pre;text-align:right;letter-spacing:1.551px;">00:00.039.240</div>
<div style="position:absolute;right:1603.86px;top:378.25px;font-size:21.8px;line-height:21.8px;color:#0e0e0e;white-space:pre;text-align:right;letter-spacing:1.339px;">75.21 µs</div>
<div style="position:absolute;left:782.50px;top:378.25px;font-size:21.8px;line-height:21.8px;color:#0e0e0e;white-space:pre;letter-spacing:0.654px;">Active</div>
<div style="position:absolute;right:1191.76px;top:378.25px;font-size:21.8px;line-height:21.8px;color:#0e0e0e;white-space:pre;text-align:right;letter-spacing:1.441px;">1.28 ms</div>
<div style="position:absolute;left:1194.90px;top:378.25px;font-size:21.8px;line-height:21.8px;color:#0e0e0e;white-space:pre;letter-spacing:1.117px;">Frame 9</div>
<div style="position:absolute;left:1388.50px;top:378.25px;font-size:21.8px;line-height:21.8px;color:#0e0e0e;white-space:pre;letter-spacing:0.784px;">Command Buffer 0:Dawn_RenderPassEncoder_drawing instanced particles</div>
<div style="position:absolute;left:2194.50px;top:378.25px;font-size:21.8px;line-height:21.8px;color:#0e0e0e;white-space:pre;letter-spacing:0.833px;">(Google Chrome Helper (GPU))</div>
<div style="position:absolute;left:40.70px;top:414.25px;font-size:21.8px;line-height:21.8px;color:#0e0e0e;white-space:pre;letter-spacing:0.734px;">Fragment</div>
<div style="position:absolute;right:1777.45px;top:414.25px;font-size:21.8px;line-height:21.8px;color:#0e0e0e;white-space:pre;text-align:right;letter-spacing:1.551px;">00:00.039.344</div>
<div style="position:absolute;right:1603.86px;top:414.25px;font-size:21.8px;line-height:21.8px;color:#0e0e0e;white-space:pre;text-align:right;letter-spacing:1.339px;">65.58 µs</div>
<div style="position:absolute;left:782.50px;top:414.25px;font-size:21.8px;line-height:21.8px;color:#0e0e0e;white-space:pre;letter-spacing:0.654px;">Active</div>
<div style="position:absolute;right:1191.76px;top:414.25px;font-size:21.8px;line-height:21.8px;color:#0e0e0e;white-space:pre;text-align:right;letter-spacing:1.441px;">1.38 ms</div>
<div style="position:absolute;left:1194.90px;top:414.25px;font-size:21.8px;line-height:21.8px;color:#0e0e0e;white-space:pre;letter-spacing:1.117px;">Frame 9</div>
<div style="position:absolute;left:1388.50px;top:414.25px;font-size:21.8px;line-height:21.8px;color:#0e0e0e;white-space:pre;letter-spacing:0.784px;">Command Buffer 0:Dawn_RenderPassEncoder_drawing instanced particles</div>
<div style="position:absolute;left:2194.50px;top:414.25px;font-size:21.8px;line-height:21.8px;color:#0e0e0e;white-space:pre;letter-spacing:0.833px;">(Google Chrome Helper (GPU))</div>
<div style="position:absolute;left:40.70px;top:450.25px;font-size:21.8px;line-height:21.8px;color:#0e0e0e;white-space:pre;letter-spacing:0.811px;">Compute</div>
<div style="position:absolute;right:1777.45px;top:450.25px;font-size:21.8px;line-height:21.8px;color:#0e0e0e;white-space:pre;text-align:right;letter-spacing:1.551px;">00:00.046.324</div>
<div style="position:absolute;right:1603.86px;top:450.25px;font-size:21.8px;line-height:21.8px;color:#0e0e0e;white-space:pre;text-align:right;letter-spacing:1.340px;">903.00 µs</div>
<div style="position:absolute;left:782.50px;top:450.25px;font-size:21.8px;line-height:21.8px;color:#0e0e0e;white-space:pre;letter-spacing:0.654px;">Active</div>
<div style="position:absolute;right:1191.86px;top:450.25px;font-size:21.8px;line-height:21.8px;color:#0e0e0e;white-space:pre;text-align:right;letter-spacing:1.340px;">395.38 µs</div>
<div style="position:absolute;left:1194.90px;top:450.25px;font-size:21.8px;line-height:21.8px;color:#0e0e0e;white-space:pre;letter-spacing:1.081px;">Frame 11</div>
<div style="position:absolute;left:1388.50px;top:450.25px;font-size:21.8px;line-height:21.8px;color:#0e0e0e;white-space:pre;letter-spacing:0.825px;">Command Buffer 0:Dawn_ComputePassEncoder_storing particle data</div>
<div style="position:absolute;left:2137.20px;top:450.25px;font-size:21.8px;line-height:21.8px;color:#0e0e0e;white-space:pre;letter-spacing:0.833px;">(Google Chrome Helper (GPU))</div>
<div style="position:absolute;left:40.70px;top:486.25px;font-size:21.8px;line-height:21.8px;color:#0e0e0e;white-space:pre;letter-spacing:0.680px;">Vertex</div>
<div style="position:absolute;right:1777.45px;top:486.25px;font-size:21.8px;line-height:21.8px;color:#0e0e0e;white-space:pre;text-align:right;letter-spacing:1.551px;">00:00.047.260</div>
<div style="position:absolute;right:1603.86px;top:486.25px;font-size:21.8px;line-height:21.8px;color:#0e0e0e;white-space:pre;text-align:right;letter-spacing:1.339px;">75.50 µs</div>
<div style="position:absolute;left:782.50px;top:486.25px;font-size:21.8px;line-height:21.8px;color:#0e0e0e;white-space:pre;letter-spacing:0.654px;">Active</div>
<div style="position:absolute;right:1191.76px;top:486.25px;font-size:21.8px;line-height:21.8px;color:#0e0e0e;white-space:pre;text-align:right;letter-spacing:1.441px;">1.33 ms</div>
<div style="position:absolute;left:1194.90px;top:486.25px;font-size:21.8px;line-height:21.8px;color:#0e0e0e;white-space:pre;letter-spacing:1.081px;">Frame 11</div>
<div style="position:absolute;left:1388.50px;top:486.25px;font-size:21.8px;line-height:21.8px;color:#0e0e0e;white-space:pre;letter-spacing:0.784px;">Command Buffer 0:Dawn_RenderPassEncoder_drawing instanced particles</div>
<div style="position:absolute;left:2194.50px;top:486.25px;font-size:21.8px;line-height:21.8px;color:#0e0e0e;white-space:pre;letter-spacing:0.833px;">(Google Chrome Helper (GPU))</div>
</div>
<div style="position:absolute;left:112px;top:1474px;width:2336px;height:2px;background:#dcdcdc;"></div>
<div style="position:absolute;left:112px;top:1476px;width:2336px;height:53px;background:#f1f1f1;"></div>
<div style="position:absolute;left:141px;top:1491.81px;font-size:22.43px;line-height:22.43px;color:#7a7a7a;font-weight:400;white-space:pre;letter-spacing:0.746px;">Input filter</div>
<div style="position:absolute;left:279px;top:1480.5px;width:598px;height:43px;border-radius:11px;background:#fff;border:1px solid #d8d8d8;box-sizing:border-box;"></div>
<svg style="position:absolute;left:0;top:1400px" width="900" height="140">
<circle cx="300" cy="101.7" r="12.8" fill="#0b64e1"/>
<path d="M293.8 97.2 H306.2 M295.8 101.7 H304.2 M297.8 106.2 H302.2" stroke="#fff" stroke-width="2"/>
<rect x="328.5" y="89.6" width="75" height="27.2" rx="3" fill="#d9d9d9"/>
<rect x="404.4" y="89.6" width="88.1" height="27.2" rx="3" fill="#e9e9e9"/>
<path d="M383.5 100.5 L388.5 105.5 L393.5 100.5" fill="none" stroke="#222" stroke-width="2.4"/>
<circle cx="816.6" cy="101.7" r="9.2" fill="#7c7c7c"/>
<path d="M813.2 98.3 L820 105.1 M820 98.3 L813.2 105.1" stroke="#fff" stroke-width="1.8"/>
<rect x="838.4" y="91" width="29.6" height="22.4" rx="3.5" fill="#0b64e1"/>
<rect x="851.5" y="94" width="3.8" height="16.4" fill="#fff"/>
</svg>
<div style="position:absolute;left:337px;top:1495.16px;font-size:18.0px;line-height:18.0px;color:#2a2a2a;font-weight:400;white-space:pre;">ANY</div>
<div style="position:absolute;left:414px;top:1491.77px;font-size:22.01px;line-height:22.01px;color:#2a2a2a;font-weight:400;white-space:pre;letter-spacing:0.381px;">Dawn_</div>
<div style="position:absolute;right:153.41px;top:1492.12px;font-size:19.7px;line-height:19.7px;color:#7a7a7a;font-weight:400;white-space:pre;text-align:right;letter-spacing:0.690px;">1 of 315 selected</div>
</div>
<div style="position:absolute;left:112px;top:76px;width:2336px;height:1453px;border-radius:20px;box-shadow:inset 0 0 0 1px rgba(255,255,255,0.55);pointer-events:none;"></div>
</body></html>
